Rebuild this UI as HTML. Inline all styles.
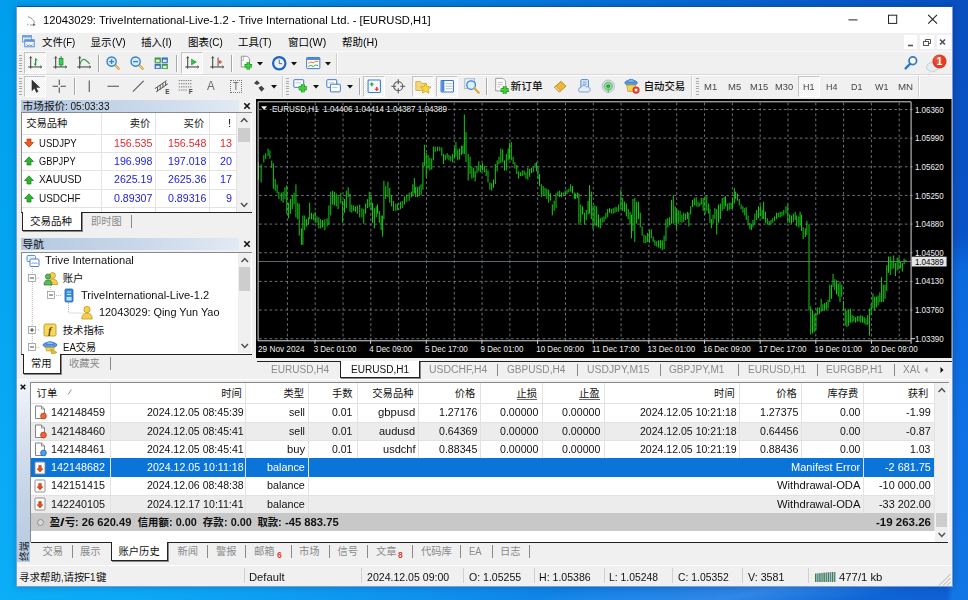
<!DOCTYPE html>
<html><head><meta charset="utf-8"><title>MT4</title>
<style>
html,body{margin:0;padding:0}
body{width:968px;height:600px;overflow:hidden;position:relative;background:linear-gradient(168deg,rgba(255,255,255,0) 88%,rgba(120,190,255,.32) 93.5%,rgba(255,255,255,0) 97%),radial-gradient(ellipse 75% 120% at 0% 100%,rgba(10,200,255,.5) 0%,rgba(10,200,255,0) 100%),linear-gradient(180deg,rgba(30,130,255,0) 35%,rgba(40,140,255,.3) 100%),linear-gradient(95deg,#009aeb 0%,#048fe6 25%,#0576dc 55%,#054bbe 100%);font-family:"Liberation Sans","Noto Sans CJK SC",sans-serif;font-size:10px;color:#1a1a1a}
.a{position:absolute;box-sizing:border-box}
.t{white-space:pre}
.l{display:inline-block;transform-origin:0 50%;white-space:pre;text-align:left;vertical-align:baseline}
</style></head><body>
<div class="a" style="left:946.00px;top:0.00px;width:22.00px;height:600.00px;background:linear-gradient(180deg,#0a4fc0 0%,#0a53c6 39%,#0c69dc 45%,#0e70e2 70%,#1276e4 100%);-webkit-mask-image:linear-gradient(90deg,transparent 0,#000 30%);mask-image:linear-gradient(90deg,transparent 0,#000 30%)"></div>
<div class="a" style="left:16.00px;top:5.60px;width:937.00px;height:581.40px;background:#f0f0f0;border:1px solid rgba(20,90,190,.55);border-top-color:#12528e;box-shadow:0 0 7px rgba(0,0,50,.22)"></div>
<div class="a" style="left:17.00px;top:6.60px;width:935.00px;height:26.40px;background:#fff"></div>
<svg class="a" style="left:25.00px;top:15.00px" width="14" height="12" viewBox="0 0 14 12"><path d="M3 1.500l3 1.500M6 3q3.500 2 3.500 5.500M2 9l1.500 1M5 10h4" stroke="#9a9a9a" stroke-width="1" fill="none"/><path d="M8 8.200l2.800 1.800-2.800.800z" fill="#555"/></svg>
<div class="a t" style="top:13.00px;height:14px;line-height:14px;color:#000;left:43.00px;"><span class="l" style="width:388.01px;font-size:11.45px;transform:scaleX(0.980)">12043029: TriveInternational-Live-1.2 - Trive International Ltd. - [EURUSD,H1]</span></div>
<svg class="a" style="left:845.00px;top:10.00px" width="100" height="20" viewBox="0 0 100 20"><path d="M3.500 9.900h9" stroke="#222" stroke-width="1"/><rect x="43.500" y="5.200" width="8.200" height="8.200" fill="none" stroke="#222" stroke-width="1"/><path d="M83.200 4.900l8.800 8.800M92 4.900l-8.800 8.800" stroke="#222" stroke-width="1.100"/></svg>
<div class="a" style="left:17.00px;top:33.00px;width:935.00px;height:18.00px;background:#f0f0f0"></div>
<svg class="a" style="left:22.00px;top:35.00px" width="14" height="13" viewBox="0 0 14 13"><rect x=".5" y=".5" width="9" height="6.500" fill="#dce9f8" stroke="#6d9fdc" stroke-width=".9"/><rect x=".5" y=".5" width="9" height="2" fill="#6d9fdc"/><rect x="2.800" y="4.800" width="9.400" height="7" fill="#eef5fd" stroke="#4f86cf" stroke-width=".9"/><rect x="2.800" y="4.800" width="9.400" height="2" fill="#5f93d6"/><path d="M4.500 9.500l1.500 1.500 1.500-1.500 1.500 1.500 1.500-1.500" stroke="#4f86cf" fill="none" stroke-width=".8"/></svg>
<div class="a t" style="top:34.50px;height:15px;line-height:15px;color:#000;left:42.00px;"><span style="font-size:10.5px">文件</span><span class="l" style="width:12.27px;font-size:10.81px;transform:scaleX(0.888)">(F)</span></div>
<div class="a t" style="top:34.50px;height:15px;line-height:15px;color:#000;left:90.50px;"><span style="font-size:10.5px">显示</span><span class="l" style="width:13.76px;font-size:10.81px;transform:scaleX(0.955)">(V)</span></div>
<div class="a t" style="top:34.50px;height:15px;line-height:15px;color:#000;left:141.00px;"><span style="font-size:10.5px">插入</span><span class="l" style="width:9.77px;font-size:10.81px;transform:scaleX(0.958)">(I)</span></div>
<div class="a t" style="top:34.50px;height:15px;line-height:15px;color:#000;left:188.00px;"><span style="font-size:10.5px">图表</span><span class="l" style="width:13.74px;font-size:10.81px;transform:scaleX(0.915)">(C)</span></div>
<div class="a t" style="top:34.50px;height:15px;line-height:15px;color:#000;left:238.00px;"><span style="font-size:10.5px">工具</span><span class="l" style="width:12.67px;font-size:10.81px;transform:scaleX(0.918)">(T)</span></div>
<div class="a t" style="top:34.50px;height:15px;line-height:15px;color:#000;left:288.00px;"><span style="font-size:10.5px">窗口</span><span class="l" style="width:17.28px;font-size:10.81px;transform:scaleX(0.992)">(W)</span></div>
<div class="a t" style="top:34.50px;height:15px;line-height:15px;color:#000;left:342.00px;"><span style="font-size:10.5px">帮助</span><span class="l" style="width:14.76px;font-size:10.81px;transform:scaleX(0.983)">(H)</span></div>
<div class="a" style="left:904.00px;top:34.80px;width:13.00px;height:14.60px;background:#fff"></div>
<div class="a" style="left:920.00px;top:34.80px;width:14.30px;height:14.60px;background:#fff"></div>
<div class="a" style="left:936.50px;top:34.80px;width:14.50px;height:14.60px;background:#fff"></div>
<svg class="a" style="left:903.20px;top:34.00px" width="47" height="16" viewBox="0 0 47 16"><path d="M5 11.500h5" stroke="#555" stroke-width="1.6"/><rect x="20.500" y="7.500" width="5" height="4" fill="#fff" stroke="#555"/><path d="M22.500 7.500v-2h5v4h-2" fill="none" stroke="#555"/><path d="M37 5.500l5 5M42 5.500l-5 5" stroke="#4a5566" stroke-width="1.700"/></svg>
<div class="a" style="left:17.50px;top:51.00px;width:934.00px;height:1.00px;background:#fafafa"></div>
<div class="a" style="left:17.50px;top:74.00px;width:934.00px;height:1.00px;background:#d9d9d9"></div>
<div class="a" style="left:17.50px;top:74.80px;width:934.00px;height:1.00px;background:#fff"></div>
<div class="a" style="left:19.30px;top:54.50px;width:3.00px;height:17.00px;background:repeating-linear-gradient(180deg,#9a9a9a 0 1px,transparent 1px 2.600px);opacity:.8"></div>
<div class="a" style="left:24.40px;top:52.30px;width:21.50px;height:21.50px;background:#f9f9f9;border:1px solid #c4c4c4;border-right-color:#fff;border-bottom-color:#fff;background-image:repeating-conic-gradient(#fff 0 25%,#f0f0f0 0 50%);background-size:2px 2px"></div>
<svg class="a" style="left:26.75px;top:55.25px" width="16.5" height="16.5" viewBox="0 0 20 20"><path d="M4.500 2v14.500M1.500 14.500h16" stroke="#3a3a3a" stroke-width="1.200" fill="none"/><path d="M3 4l1.500-2 1.500 2M16 13l2 1.500-2 1.500" stroke="#3a3a3a" fill="none" stroke-width=".9"/><path d="M10.500 4v9M8.500 11h2M10.500 6h2" stroke="#18a030" stroke-width="1.500" fill="none"/></svg>
<svg class="a" style="left:51.85px;top:55.25px" width="16.5" height="16.5" viewBox="0 0 20 20"><path d="M4.500 2v14.500M1.500 14.500h16" stroke="#3a3a3a" stroke-width="1.200" fill="none"/><path d="M3 4l1.500-2 1.500 2M16 13l2 1.500-2 1.500" stroke="#3a3a3a" fill="none" stroke-width=".9"/><path d="M11 1.500v13" stroke="#1a7a22" stroke-width="1.200"/><rect x="8.700" y="4" width="4.600" height="8" fill="#2fd84a" stroke="#1a7a22" stroke-width=".8"/></svg>
<svg class="a" style="left:76.05px;top:55.25px" width="16.5" height="16.5" viewBox="0 0 20 20"><path d="M4.500 2v14.500M1.500 14.500h16" stroke="#3a3a3a" stroke-width="1.200" fill="none"/><path d="M3 4l1.500-2 1.500 2M16 13l2 1.500-2 1.500" stroke="#3a3a3a" fill="none" stroke-width=".9"/><path d="M4.500 12q3-9 7-6t5 5" stroke="#2a9a3a" stroke-width="1.300" fill="none"/></svg>
<div class="a" style="left:98.00px;top:54.50px;width:1.00px;height:17.00px;background:#a8a8a8"></div>
<div class="a" style="left:99.00px;top:54.50px;width:1.00px;height:17.00px;background:#fff"></div>
<svg class="a" style="left:104.55px;top:55.25px" width="16.5" height="16.5" viewBox="0 0 20 20"><path d="M11.500 11.500l5 5" stroke="#d9a53a" stroke-width="3" stroke-linecap="round"/><path d="M11.500 11.500l5 5" stroke="#f5d98a" stroke-width="1.200" stroke-linecap="round"/><circle cx="8" cy="8" r="5.600" fill="#d8ecfb" stroke="#2f7fd0" stroke-width="1.600"/><path d="M5 8h6M8 5v6" stroke="#2f7fd0" stroke-width="1.600"/></svg>
<svg class="a" style="left:128.75px;top:55.25px" width="16.5" height="16.5" viewBox="0 0 20 20"><path d="M11.500 11.500l5 5" stroke="#d9a53a" stroke-width="3" stroke-linecap="round"/><path d="M11.500 11.500l5 5" stroke="#f5d98a" stroke-width="1.200" stroke-linecap="round"/><circle cx="8" cy="8" r="5.600" fill="#d8ecfb" stroke="#2f7fd0" stroke-width="1.600"/><path d="M5 8h6" stroke="#2f7fd0" stroke-width="1.600"/></svg>
<svg class="a" style="left:153.45px;top:55.25px" width="16.5" height="16.5" viewBox="0 0 20 20"><rect x="2" y="3" width="7.500" height="6.500" fill="#3f9a3f"/><rect x="10.500" y="3" width="7.500" height="6.500" fill="#2f6fc8"/><rect x="2" y="10.500" width="7.500" height="6.500" fill="#2f6fc8"/><rect x="10.500" y="10.500" width="7.500" height="6.500" fill="#3f9a3f"/><rect x="3.500" y="5.500" width="4.500" height="3" fill="#dff0df"/><rect x="12" y="5.500" width="4.500" height="3" fill="#dfeafa"/><rect x="3.500" y="13" width="4.500" height="3" fill="#dfeafa"/><rect x="12" y="13" width="4.500" height="3" fill="#dff0df"/></svg>
<div class="a" style="left:176.30px;top:54.50px;width:1.00px;height:17.00px;background:#a8a8a8"></div>
<div class="a" style="left:177.30px;top:54.50px;width:1.00px;height:17.00px;background:#fff"></div>
<div class="a" style="left:181.30px;top:52.30px;width:21.50px;height:21.50px;background:#f9f9f9;border:1px solid #c4c4c4;border-right-color:#fff;border-bottom-color:#fff;background-image:repeating-conic-gradient(#fff 0 25%,#f0f0f0 0 50%);background-size:2px 2px"></div>
<svg class="a" style="left:184.05px;top:55.25px" width="16.5" height="16.5" viewBox="0 0 20 20"><path d="M4.500 2v14.500M1.500 14.500h16" stroke="#3a3a3a" stroke-width="1.200" fill="none"/><path d="M3 4l1.500-2 1.500 2M16 13l2 1.500-2 1.500" stroke="#3a3a3a" fill="none" stroke-width=".9"/><path d="M9 5l6 3.500-6 3.500z" fill="#35c04a" stroke="#1a8a2a" stroke-width=".7"/></svg>
<svg class="a" style="left:208.75px;top:55.25px" width="16.5" height="16.5" viewBox="0 0 20 20"><path d="M4.500 2v14.500M1.500 14.500h16" stroke="#3a3a3a" stroke-width="1.200" fill="none"/><path d="M3 4l1.500-2 1.500 2M16 13l2 1.500-2 1.500" stroke="#3a3a3a" fill="none" stroke-width=".9"/><path d="M11 3v11" stroke="#555" stroke-width="1.200"/><path d="M16 8.500h-4M14 6.500l-2 2 2 2" stroke="#d04a20" stroke-width="1.300" fill="none"/></svg>
<div class="a" style="left:230.70px;top:54.50px;width:1.00px;height:17.00px;background:#a8a8a8"></div>
<div class="a" style="left:231.70px;top:54.50px;width:1.00px;height:17.00px;background:#fff"></div>
<svg class="a" style="left:237.55px;top:55.25px" width="16.5" height="16.5" viewBox="0 0 20 20"><path d="M4 1.500h7l3 3v10h-10z" fill="#fff" stroke="#777" stroke-width=".9"/><path d="M6.500 1.500v5h-2.500" fill="none" stroke="#999" stroke-width=".8"/><path d="M12.5 8.5v9M8.0 13h9" stroke="#1a8a1a" stroke-width="4.200"/><path d="M12.5 8.5v9M8.0 13h9" stroke="#3fd23f" stroke-width="2.600"/></svg>
<svg class="a" style="left:257.10px;top:62.00px" width="6" height="4" viewBox="0 0 6 4"><path d="M0 0h6l-3 3.500z" fill="#111"/></svg>
<svg class="a" style="left:270.65px;top:55.25px" width="16.5" height="16.5" viewBox="0 0 20 20"><circle cx="10" cy="10" r="7.500" fill="#eaf4ff" stroke="#1f62c0" stroke-width="2.600"/><path d="M10 5.500v5h3.500" stroke="#556" stroke-width="1.100" fill="none"/></svg>
<svg class="a" style="left:291.10px;top:62.00px" width="6" height="4" viewBox="0 0 6 4"><path d="M0 0h6l-3 3.500z" fill="#111"/></svg>
<svg class="a" style="left:305.05px;top:55.25px" width="16.5" height="16.5" viewBox="0 0 20 20"><rect x="2" y="3" width="16" height="13.500" rx="1" fill="#fff" stroke="#3a78c8" stroke-width="1.200"/><rect x="2" y="3" width="16" height="3" fill="#4a8ad8"/><path d="M4 10l3-1.500 3 1 3-2 3 .5" stroke="#e0703a" stroke-width="1.200" fill="none"/><path d="M4 14l3-1.500 3 1.500 3-2 3 1" stroke="#2fa84a" stroke-width="1.200" fill="none"/></svg>
<svg class="a" style="left:325.20px;top:62.00px" width="6" height="4" viewBox="0 0 6 4"><path d="M0 0h6l-3 3.500z" fill="#111"/></svg>
<div class="a" style="left:335.50px;top:52.50px;width:1.00px;height:21.00px;background:#d0d0d0"></div>
<div class="a" style="left:336.50px;top:52.50px;width:1.00px;height:21.00px;background:#fff"></div>
<svg class="a" style="left:902.00px;top:53.50px" width="18" height="18" viewBox="0 0 20 20"><circle cx="12" cy="7.500" r="4.200" fill="#fff" stroke="#2f78d0" stroke-width="2"/><path d="M9 11l-5 5" stroke="#2f78d0" stroke-width="2.600" stroke-linecap="round"/></svg>
<svg class="a" style="left:925.00px;top:54.00px" width="24" height="20" viewBox="0 0 24 20"><ellipse cx="7.500" cy="13" rx="6" ry="4.500" fill="#e8eef0" stroke="#b8c4c8" stroke-width=".8"/><path d="M5 16.500l-1 3 4-2.500z" fill="#d8e4e0"/><circle cx="14.500" cy="7.500" r="7" fill="#e23b24"/><circle cx="13" cy="5.500" r="4" fill="#f06a4a" opacity=".5"/><text x="14.500" y="11.200" font-size="10.500" font-weight="bold" fill="#fff" text-anchor="middle" font-family="Liberation Sans,sans-serif">1</text></svg>
<div class="a" style="left:19.30px;top:78.00px;width:3.00px;height:17.00px;background:repeating-linear-gradient(180deg,#9a9a9a 0 1px,transparent 1px 2.600px);opacity:.8"></div>
<div class="a" style="left:24.40px;top:75.80px;width:21.50px;height:21.50px;background:#f9f9f9;border:1px solid #c4c4c4;border-right-color:#fff;border-bottom-color:#fff;background-image:repeating-conic-gradient(#fff 0 25%,#f0f0f0 0 50%);background-size:2px 2px"></div>
<svg class="a" style="left:26.75px;top:78.05px" width="16.5" height="16.5" viewBox="0 0 20 20"><path d="M6 2.500v13l3-3 2.500 5 2-1-2.500-5h4.500z" fill="#333" stroke="#222" stroke-width=".5"/></svg>
<svg class="a" style="left:51.15px;top:78.05px" width="16.5" height="16.5" viewBox="0 0 20 20"><path d="M10 2v6.500M10 11.500v6.500M2 10h6.500M11.500 10h6.500" stroke="#444" stroke-width="1.200"/></svg>
<div class="a" style="left:74.30px;top:78.00px;width:1.00px;height:17.00px;background:#a8a8a8"></div>
<div class="a" style="left:75.30px;top:78.00px;width:1.00px;height:17.00px;background:#fff"></div>
<svg class="a" style="left:80.75px;top:78.05px" width="16.5" height="16.5" viewBox="0 0 20 20"><path d="M10 3v14" stroke="#555" stroke-width="1.300"/></svg>
<svg class="a" style="left:105.45px;top:78.05px" width="16.5" height="16.5" viewBox="0 0 20 20"><path d="M3 10h14" stroke="#555" stroke-width="1.300"/></svg>
<svg class="a" style="left:129.65px;top:78.05px" width="16.5" height="16.5" viewBox="0 0 20 20"><path d="M3.500 16.500l13-13" stroke="#555" stroke-width="1.300"/></svg>
<svg class="a" style="left:153.00px;top:77.30px" width="18" height="18" viewBox="0 0 20 20"><path d="M2 13l13-9M3.500 16.500l13-9M5 11v5M8 9v5M11 7v5M14 5v5" stroke="#555" stroke-width="1.100"/><text x="13.500" y="19" font-size="7" font-weight="bold" fill="#444" font-family="Liberation Sans,sans-serif">E</text></svg>
<svg class="a" style="left:177.30px;top:77.30px" width="18" height="18" viewBox="0 0 20 20"><path d="M2 4h14M2 7.500h14M2 11h14M2 14.500h9" stroke="#777" stroke-width="1.100" stroke-dasharray="1.500 1"/><text x="13" y="19" font-size="7" font-weight="bold" fill="#444" font-family="Liberation Sans,sans-serif">F</text></svg>
<div class="a t" style="top:79.00px;height:15px;line-height:15px;color:#6a6a6a;left:60.80px;width:300px;text-align:center;"><span class="l" style="width:7.74px;font-size:12.36px;transform:scaleX(0.939)">A</span></div>
<div class="a" style="left:229.50px;top:79.50px;width:12.00px;height:13.50px;border:1px dotted #777"></div>
<div class="a t" style="top:79.00px;height:15px;line-height:15px;color:#5a5a5a;left:85.60px;width:300px;text-align:center;"><span class="l" style="width:5.76px;font-size:11.33px;transform:scaleX(0.833)">T</span></div>
<svg class="a" style="left:251.45px;top:78.05px" width="16.5" height="16.5" viewBox="0 0 20 20"><path d="M3 7l4-4 4 4-4 2.500z M9 13l4-2.500 4 4-4 4z" fill="#444" transform="scale(.9) translate(1,0)"/></svg>
<svg class="a" style="left:271.20px;top:84.80px" width="6" height="4" viewBox="0 0 6 4"><path d="M0 0h6l-3 3.500z" fill="#111"/></svg>
<div class="a" style="left:282.00px;top:76.00px;width:1.00px;height:21.00px;background:#d0d0d0"></div>
<div class="a" style="left:283.00px;top:76.00px;width:1.00px;height:21.00px;background:#fff"></div>
<div class="a" style="left:286.30px;top:78.00px;width:3.00px;height:17.00px;background:repeating-linear-gradient(180deg,#9a9a9a 0 1px,transparent 1px 2.600px);opacity:.8"></div>
<svg class="a" style="left:291.70px;top:77.30px" width="18" height="18" viewBox="0 0 20 20"><rect x="2" y="3" width="11" height="8.500" rx=".8" fill="#fff" stroke="#3a78c8" stroke-width="1.100"/><path d="M4 6.5h6" stroke="#9ab" stroke-width=".8"/><path d="M12 8.0v9M7.5 12.5h9" stroke="#1a8a1a" stroke-width="4.200"/><path d="M12 8.0v9M7.5 12.5h9" stroke="#3fd23f" stroke-width="2.600"/></svg>
<svg class="a" style="left:313.10px;top:84.80px" width="6" height="4" viewBox="0 0 6 4"><path d="M0 0h6l-3 3.500z" fill="#111"/></svg>
<svg class="a" style="left:325.10px;top:77.30px" width="18" height="18" viewBox="0 0 20 20"><rect x="2" y="3" width="11" height="8.500" rx=".8" fill="#fff" stroke="#3a78c8" stroke-width="1.100"/><path d="M4 6.5h6" stroke="#9ab" stroke-width=".8"/><rect x="6" y="8" width="11" height="8.500" rx=".8" fill="#fff" stroke="#3a78c8" stroke-width="1.100"/><path d="M8 11.5h6" stroke="#9ab" stroke-width=".8"/></svg>
<svg class="a" style="left:346.90px;top:84.80px" width="6" height="4" viewBox="0 0 6 4"><path d="M0 0h6l-3 3.500z" fill="#111"/></svg>
<div class="a" style="left:359.00px;top:78.00px;width:1.00px;height:17.00px;background:#a8a8a8"></div>
<div class="a" style="left:360.00px;top:78.00px;width:1.00px;height:17.00px;background:#fff"></div>
<div class="a" style="left:363.40px;top:75.80px;width:21.50px;height:21.50px;background:#f9f9f9;border:1px solid #c4c4c4;border-right-color:#fff;border-bottom-color:#fff;background-image:repeating-conic-gradient(#fff 0 25%,#f0f0f0 0 50%);background-size:2px 2px"></div>
<svg class="a" style="left:365.95px;top:78.05px" width="16.5" height="16.5" viewBox="0 0 20 20"><rect x="2.500" y="2.500" width="15" height="15" rx="1" fill="#f4f9ff" stroke="#3a80d0" stroke-width="1.300"/><path d="M7 5l3 3h-2v2h-2v-2h-2z" fill="#2faa3a"/><path d="M13 16l-3-3h2v-2h2v2h2z" fill="#e0442a"/></svg>
<svg class="a" style="left:390.45px;top:78.05px" width="16.5" height="16.5" viewBox="0 0 20 20"><circle cx="10" cy="10" r="5.500" fill="none" stroke="#555" stroke-width="1.300"/><path d="M10 1.500v6M10 12.500v6M1.500 10h6M12.500 10h6" stroke="#555" stroke-width="1.300"/></svg>
<div class="a" style="left:412.00px;top:75.80px;width:21.50px;height:21.50px;background:#f9f9f9;border:1px solid #c4c4c4;border-right-color:#fff;border-bottom-color:#fff;background-image:repeating-conic-gradient(#fff 0 25%,#f0f0f0 0 50%);background-size:2px 2px"></div>
<svg class="a" style="left:413.90px;top:77.30px" width="18" height="18" viewBox="0 0 20 20"><path d="M2 5h5l1.500 2h5v8h-11.500z" fill="#f3d77a" stroke="#c8a030" stroke-width=".8"/><path d="M13 7l1.800 3.600 4 .5-2.900 2.800.7 4-3.600-1.900-3.600 1.900.7-4-2.900-2.800 4-.5z" fill="#f8d840" stroke="#c89a20" stroke-width=".8"/></svg>
<div class="a" style="left:436.40px;top:75.80px;width:21.50px;height:21.50px;background:#f9f9f9;border:1px solid #c4c4c4;border-right-color:#fff;border-bottom-color:#fff;background-image:repeating-conic-gradient(#fff 0 25%,#f0f0f0 0 50%);background-size:2px 2px"></div>
<svg class="a" style="left:438.75px;top:78.05px" width="16.5" height="16.5" viewBox="0 0 20 20"><rect x="2.500" y="3" width="15" height="14" rx="1" fill="#fff" stroke="#3a78c8" stroke-width="1.300"/><rect x="3" y="3.500" width="3.500" height="13" fill="#4a8ad8"/><path d="M8 7h8M8 10h8M8 13h8" stroke="#9ab" stroke-width=".9"/></svg>
<svg class="a" style="left:462.80px;top:77.30px" width="18" height="18" viewBox="0 0 20 20"><rect x="2" y="2" width="11" height="11" fill="#eef4fa" stroke="#8ab" stroke-width=".8"/><circle cx="9" cy="9" r="4.800" fill="#dbeeff" stroke="#3a80d0" stroke-width="1.400"/><path d="M12.500 12.500l5 5" stroke="#d9a53a" stroke-width="2.400" stroke-linecap="round"/></svg>
<div class="a" style="left:485.80px;top:78.00px;width:1.00px;height:17.00px;background:#a8a8a8"></div>
<div class="a" style="left:486.80px;top:78.00px;width:1.00px;height:17.00px;background:#fff"></div>
<svg class="a" style="left:492.50px;top:77.30px" width="18" height="18" viewBox="0 0 20 20"><path d="M3 1.500h8l3 3v11h-11z" fill="#fff" stroke="#888" stroke-width=".9"/><path d="M5 6h6M5 8.500h6M5 11h3" stroke="#aaa" stroke-width=".8"/><path d="M13 10.0v9M8.5 14.5h9" stroke="#1a8a1a" stroke-width="4.200"/><path d="M13 10.0v9M8.5 14.5h9" stroke="#3fd23f" stroke-width="2.600"/></svg>
<div class="a t" style="top:79.00px;height:15px;line-height:15px;color:#111;left:510.60px;font-weight:500;"><span style="font-size:10.7px">新订单</span></div>
<svg class="a" style="left:551.85px;top:78.05px" width="16.5" height="16.5" viewBox="0 0 20 20"><path d="M3 11l8-7 6 6-8 7z" fill="#e8b83a" stroke="#b07a10" stroke-width=".9"/><path d="M3 11l6 6 1-2-5-5z" fill="#f6dc8a" stroke="#b07a10" stroke-width=".6"/></svg>
<svg class="a" style="left:575.95px;top:78.05px" width="16.5" height="16.5" viewBox="0 0 20 20"><rect x="6" y="2" width="9" height="10" rx="1" fill="#e8f2ff" stroke="#3a78c8" stroke-width="1.100"/><path d="M8 5h5M8 7.500h5" stroke="#3a78c8" stroke-width=".9"/><path d="M3 14.500a3 3 0 0 1 3-3 3.500 3.500 0 0 1 6.500-.5 3 3 0 0 1 4.500 2.800 2.500 2.500 0 0 1-2.500 3.200h-9a2.500 2.500 0 0 1-2.500-2.500z" fill="#e4eefb" stroke="#5a8acb" stroke-width=".9"/></svg>
<svg class="a" style="left:600.25px;top:78.05px" width="16.5" height="16.5" viewBox="0 0 20 20"><circle cx="10" cy="10" r="7.500" fill="#d8e8e0" stroke="#9ab" stroke-width=".8"/><circle cx="10" cy="10" r="5" fill="#8fd49a" stroke="#4aa85a" stroke-width=".8"/><circle cx="10" cy="10" r="2.200" fill="#2a9a3a"/><path d="M10 10v8" stroke="#6a7" stroke-width="1"/></svg>
<svg class="a" style="left:623.00px;top:77.30px" width="18" height="18" viewBox="0 0 20 20"><ellipse cx="9" cy="6.500" rx="7" ry="3" fill="#5a9ae0" stroke="#2a6ab8" stroke-width=".8"/><path d="M5 6a4 3.500 0 0 1 8 0z" fill="#7ab6f0" stroke="#2a6ab8" stroke-width=".7"/><path d="M4 9h10l-1.500 7h-7z" fill="#f2cf5a" stroke="#c09a20" stroke-width=".8"/><circle cx="14.500" cy="14.500" r="4" fill="#e03a24"/><rect x="13" y="13" width="3" height="3" fill="#fff"/></svg>
<div class="a t" style="top:79.00px;height:15px;line-height:15px;color:#111;left:643.70px;font-weight:500;"><span style="font-size:10.4px">自动交易</span></div>
<div class="a" style="left:691.30px;top:76.00px;width:1.00px;height:21.00px;background:#d0d0d0"></div>
<div class="a" style="left:692.30px;top:76.00px;width:1.00px;height:21.00px;background:#fff"></div>
<div class="a" style="left:696.00px;top:78.00px;width:3.00px;height:17.00px;background:repeating-linear-gradient(180deg,#9a9a9a 0 1px,transparent 1px 2.600px);opacity:.8"></div>
<div class="a" style="left:798.00px;top:75.80px;width:21.50px;height:21.50px;background:#f9f9f9;border:1px solid #c4c4c4;border-right-color:#fff;border-bottom-color:#fff;background-image:repeating-conic-gradient(#fff 0 25%,#f0f0f0 0 50%);background-size:2px 2px"></div>
<div class="a t" style="top:80.00px;height:14px;line-height:14px;color:#454545;left:560.20px;width:300px;text-align:center;"><span class="l" style="width:13.22px;font-size:8.86px;transform:scaleX(1.075)">M1</span></div>
<div class="a t" style="top:80.00px;height:14px;line-height:14px;color:#454545;left:584.40px;width:300px;text-align:center;"><span class="l" style="width:13.22px;font-size:8.86px;transform:scaleX(1.075)">M5</span></div>
<div class="a t" style="top:80.00px;height:14px;line-height:14px;color:#454545;left:609.50px;width:300px;text-align:center;"><span class="l" style="width:18.18px;font-size:8.86px;transform:scaleX(1.055)">M15</span></div>
<div class="a t" style="top:80.00px;height:14px;line-height:14px;color:#454545;left:633.80px;width:300px;text-align:center;"><span class="l" style="width:18.18px;font-size:8.86px;transform:scaleX(1.055)">M30</span></div>
<div class="a t" style="top:80.00px;height:14px;line-height:14px;color:#454545;left:658.30px;width:300px;text-align:center;"><span class="l" style="width:11.49px;font-size:8.86px;transform:scaleX(1.015)">H1</span></div>
<div class="a t" style="top:80.00px;height:14px;line-height:14px;color:#454545;left:682.00px;width:300px;text-align:center;"><span class="l" style="width:11.49px;font-size:8.86px;transform:scaleX(1.015)">H4</span></div>
<div class="a t" style="top:80.00px;height:14px;line-height:14px;color:#454545;left:706.60px;width:300px;text-align:center;"><span class="l" style="width:11.41px;font-size:8.86px;transform:scaleX(1.008)">D1</span></div>
<div class="a t" style="top:80.00px;height:14px;line-height:14px;color:#454545;left:731.40px;width:300px;text-align:center;"><span class="l" style="width:13.55px;font-size:8.86px;transform:scaleX(1.020)">W1</span></div>
<div class="a t" style="top:80.00px;height:14px;line-height:14px;color:#454545;left:755.40px;width:300px;text-align:center;"><span class="l" style="width:15.15px;font-size:8.86px;transform:scaleX(1.099)">MN</span></div>
<div class="a" style="left:918.30px;top:76.00px;width:1.00px;height:21.00px;background:#d0d0d0"></div>
<div class="a" style="left:919.30px;top:76.00px;width:1.00px;height:21.00px;background:#fff"></div>
<div class="a" style="left:20.70px;top:99.50px;width:218.00px;height:12.00px;background:linear-gradient(90deg,#b4c8e0 0%,#c9d8ea 55%,#e2eaf4 100%)"></div>
<div class="a t" style="top:98.60px;height:15px;line-height:15px;color:#111;left:22.50px;"><span style="font-size:10.7px">市场报价</span><span class="l" style="width:44.50px;font-size:11.02px;transform:scaleX(0.908)">: 05:03:33</span></div>
<svg class="a" style="left:242.00px;top:100.60px" width="10" height="10" viewBox="0 0 10 10"><path d="M2.3 2.3L7.7 7.7M7.7 2.3L2.3 7.7" stroke="#111" stroke-width="1.6"/></svg>
<div class="a" style="left:20.70px;top:112.40px;width:231.00px;height:100.00px;background:#fff;border-left:1px solid #8a8a8a;border-top:1px solid #8a8a8a"></div>
<div class="a" style="left:21.70px;top:133.70px;width:214.70px;height:1.00px;background:#e3e3e3"></div>
<div class="a" style="left:21.70px;top:152.10px;width:214.70px;height:1.00px;background:#e3e3e3"></div>
<div class="a" style="left:21.70px;top:170.40px;width:214.70px;height:1.00px;background:#e3e3e3"></div>
<div class="a" style="left:21.70px;top:188.80px;width:214.70px;height:1.00px;background:#e3e3e3"></div>
<div class="a" style="left:21.70px;top:207.10px;width:214.70px;height:1.00px;background:#e3e3e3"></div>
<div class="a" style="left:101.30px;top:113.40px;width:1.00px;height:99.00px;background:#e3e3e3"></div>
<div class="a" style="left:155.10px;top:113.40px;width:1.00px;height:99.00px;background:#e3e3e3"></div>
<div class="a" style="left:209.20px;top:113.40px;width:1.00px;height:99.00px;background:#e3e3e3"></div>
<div class="a" style="left:236.40px;top:113.40px;width:1.00px;height:99.00px;background:#e3e3e3"></div>
<div class="a t" style="top:116.00px;height:15px;line-height:15px;color:#111;left:26.20px;"><span style="font-size:10.3px">交易品种</span></div>
<div class="a t" style="top:116.00px;height:15px;line-height:15px;color:#111;right:817.60px;"><span style="font-size:10.3px">卖价</span></div>
<div class="a t" style="top:116.00px;height:15px;line-height:15px;color:#111;right:763.80px;"><span style="font-size:10.3px">买价</span></div>
<div class="a t" style="top:116.00px;height:15px;line-height:15px;color:#111;left:79.50px;width:300px;text-align:center;"><span class="l" style="width:3.13px;font-size:10.61px;transform:scaleX(1.062)">!</span></div>
<svg class="a" style="left:24.00px;top:137.90px" width="10" height="10" viewBox="0 0 10 10"><path d="M5 9.200l4.500-4.700h-2.500v-3.500h-4v3.500h-2.500z" fill="#ee5a24" stroke="#b8320c" stroke-width=".7"/></svg>
<div class="a t" style="top:135.70px;height:15px;line-height:15px;color:#111;left:38.80px;"><span class="l" style="width:37.71px;font-size:10.71px;transform:scaleX(0.892)">USDJPY</span></div>
<div class="a t" style="top:135.70px;height:15px;line-height:15px;color:#e0282e;right:815.90px;"><span class="l" style="width:38.40px;font-size:10.71px;transform:scaleX(0.992)">156.535</span></div>
<div class="a t" style="top:135.70px;height:15px;line-height:15px;color:#e0282e;right:762.00px;"><span class="l" style="width:38.40px;font-size:10.71px;transform:scaleX(0.992)">156.548</span></div>
<div class="a t" style="top:135.70px;height:15px;line-height:15px;color:#e0282e;right:735.80px;"><span class="l" style="width:12.00px;font-size:10.71px;transform:scaleX(1.007)">13</span></div>
<svg class="a" style="left:24.00px;top:156.30px" width="10" height="10" viewBox="0 0 10 10"><path d="M5 .8l4.500 4.700h-2.500v3.500h-4v-3.500h-2.500z" fill="#2fb52f" stroke="#1a7a1a" stroke-width=".7"/></svg>
<div class="a t" style="top:154.10px;height:15px;line-height:15px;color:#111;left:38.80px;"><span class="l" style="width:36.60px;font-size:10.71px;transform:scaleX(0.866)">GBPJPY</span></div>
<div class="a t" style="top:154.10px;height:15px;line-height:15px;color:#2222d8;right:815.90px;"><span class="l" style="width:38.40px;font-size:10.71px;transform:scaleX(0.992)">196.998</span></div>
<div class="a t" style="top:154.10px;height:15px;line-height:15px;color:#2222d8;right:762.00px;"><span class="l" style="width:38.40px;font-size:10.71px;transform:scaleX(0.992)">197.018</span></div>
<div class="a t" style="top:154.10px;height:15px;line-height:15px;color:#2222d8;right:735.80px;"><span class="l" style="width:12.00px;font-size:10.71px;transform:scaleX(1.007)">20</span></div>
<svg class="a" style="left:24.00px;top:174.60px" width="10" height="10" viewBox="0 0 10 10"><path d="M5 .8l4.500 4.700h-2.500v3.500h-4v-3.500h-2.500z" fill="#2fb52f" stroke="#1a7a1a" stroke-width=".7"/></svg>
<div class="a t" style="top:172.40px;height:15px;line-height:15px;color:#111;left:38.80px;"><span class="l" style="width:42.74px;font-size:10.71px;transform:scaleX(0.957)">XAUUSD</span></div>
<div class="a t" style="top:172.40px;height:15px;line-height:15px;color:#2222d8;right:815.90px;"><span class="l" style="width:38.40px;font-size:10.71px;transform:scaleX(0.992)">2625.19</span></div>
<div class="a t" style="top:172.40px;height:15px;line-height:15px;color:#2222d8;right:762.00px;"><span class="l" style="width:38.40px;font-size:10.71px;transform:scaleX(0.992)">2625.36</span></div>
<div class="a t" style="top:172.40px;height:15px;line-height:15px;color:#2222d8;right:735.80px;"><span class="l" style="width:12.00px;font-size:10.71px;transform:scaleX(1.007)">17</span></div>
<svg class="a" style="left:24.00px;top:193.00px" width="10" height="10" viewBox="0 0 10 10"><path d="M5 .8l4.500 4.700h-2.500v3.500h-4v-3.500h-2.500z" fill="#2fb52f" stroke="#1a7a1a" stroke-width=".7"/></svg>
<div class="a t" style="top:190.80px;height:15px;line-height:15px;color:#111;left:38.80px;"><span class="l" style="width:41.57px;font-size:10.71px;transform:scaleX(0.931)">USDCHF</span></div>
<div class="a t" style="top:190.80px;height:15px;line-height:15px;color:#2222d8;right:815.90px;"><span class="l" style="width:38.40px;font-size:10.71px;transform:scaleX(0.992)">0.89307</span></div>
<div class="a t" style="top:190.80px;height:15px;line-height:15px;color:#2222d8;right:762.00px;"><span class="l" style="width:38.40px;font-size:10.71px;transform:scaleX(0.992)">0.89316</span></div>
<div class="a t" style="top:190.80px;height:15px;line-height:15px;color:#2222d8;right:735.80px;"><span class="l" style="width:6.00px;font-size:10.71px;transform:scaleX(1.007)">9</span></div>
<div class="a" style="left:237.20px;top:113.40px;width:14.30px;height:98.60px;background:#f0f0f0"></div>
<div class="a" style="left:238.20px;top:128.00px;width:12.30px;height:14.00px;background:#cdcdcd"></div>
<svg class="a" style="left:237.20px;top:116.40px" width="14.3" height="8" viewBox="0 0 14.3 8"><path d="M3.95 6L7.15 2.500L10.350000000000001 6" stroke="#505050" stroke-width="1.500" fill="none"/></svg>
<svg class="a" style="left:237.20px;top:201.00px" width="14.3" height="8" viewBox="0 0 14.3 8"><path d="M3.95 2L7.15 5.500L10.350000000000001 2" stroke="#505050" stroke-width="1.500" fill="none"/></svg>
<div class="a" style="left:20.70px;top:212.00px;width:231.00px;height:1.00px;background:#222"></div>
<div class="a" style="left:22.30px;top:212.00px;width:60.00px;height:19.30px;background:#fff;border:1px solid #222;border-top:none;box-shadow:1px 1px 0 #888"></div>
<div class="a t" style="top:214.30px;height:15px;line-height:15px;color:#111;left:30.00px;"><span style="font-size:10.5px">交易品种</span></div>
<div class="a t" style="top:214.00px;height:15px;line-height:15px;color:#8a8a8a;left:90.90px;"><span style="font-size:10.3px">即时图</span></div>
<div class="a" style="left:130.60px;top:215.00px;width:1.00px;height:13.00px;background:#8a8a8a"></div>
<div class="a" style="left:20.70px;top:237.50px;width:218.00px;height:12.30px;background:linear-gradient(90deg,#b4c8e0 0%,#c9d8ea 55%,#e2eaf4 100%)"></div>
<div class="a t" style="top:236.60px;height:15.3px;line-height:15.3px;color:#111;left:22.50px;"><span style="font-size:10.7px">导航</span></div>
<svg class="a" style="left:242.00px;top:238.80px" width="10" height="10" viewBox="0 0 10 10"><path d="M2.3 2.3L7.7 7.7M7.7 2.3L2.3 7.7" stroke="#111" stroke-width="1.6"/></svg>
<div class="a" style="left:20.70px;top:251.70px;width:231.00px;height:102.00px;background:#fff;border-left:1px solid #8a8a8a;border-top:1px solid #8a8a8a"></div>
<div class="a" style="left:237.70px;top:252.70px;width:13.50px;height:100.50px;background:#f0f0f0"></div>
<div class="a" style="left:238.70px;top:267.30px;width:11.50px;height:23.40px;background:#cdcdcd"></div>
<svg class="a" style="left:237.70px;top:255.70px" width="13.5" height="8" viewBox="0 0 13.5 8"><path d="M3.55 6L6.75 2.500L9.95 6" stroke="#505050" stroke-width="1.500" fill="none"/></svg>
<svg class="a" style="left:237.70px;top:342.20px" width="13.5" height="8" viewBox="0 0 13.5 8"><path d="M3.55 2L6.75 5.500L9.95 2" stroke="#505050" stroke-width="1.500" fill="none"/></svg>
<svg class="a" style="left:20.00px;top:252.00px" width="120" height="102" viewBox="0 0 120 102"><path d="M12.300 14v81M12.300 26h8M12.300 78h8M12.300 95.500h8M30.700 31v12M34 43.500h8M48.500 49v12h16" stroke="#aaa" stroke-width=".8" stroke-dasharray="1 1" fill="none"/></svg>
<svg class="a" style="left:25.50px;top:253.50px" width="14" height="14" viewBox="0 0 14 14"><rect x="1" y="1.500" width="8.500" height="6" rx="1" fill="#eaf3ff" stroke="#5b93d6"/><rect x="4" y="5" width="9" height="7.500" rx="1" fill="#fff" stroke="#4a84cc"/><path d="M5.500 10l1.500-1.500 1.500 1.500 1.500-1.500 1.500 1.500" stroke="#4a84cc" fill="none" stroke-width=".8"/></svg>
<div class="a t" style="top:253.20px;height:15px;line-height:15px;color:#111;left:45.00px;"><span class="l" style="width:88.92px;font-size:10.71px;transform:scaleX(1.042)">Trive International</span></div>
<svg class="a" style="left:28.30px;top:274.00px" width="8" height="8" viewBox="0 0 8 8"><rect x=".5" y=".5" width="7" height="7" fill="#fff" stroke="#9a9a9a" stroke-width=".8"/><path d="M2 4h4" stroke="#333" stroke-width=".9"/></svg>
<svg class="a" style="left:42.50px;top:270.50px" width="15" height="15" viewBox="0 0 15 15"><circle cx="9.500" cy="4.500" r="3" fill="#f3cf4a" stroke="#b89020" stroke-width=".7"/><path d="M4.500 13.500q0-5.500 5-5.500t5 5.500z" fill="#f3cf4a" stroke="#b89020" stroke-width=".7"/><circle cx="5" cy="5.500" r="2.600" fill="#5ab85a" stroke="#2a7a2a" stroke-width=".7"/><path d="M1 14q0-5 4-5t4 5z" fill="#5ab85a" stroke="#2a7a2a" stroke-width=".7"/></svg>
<div class="a t" style="top:270.50px;height:15px;line-height:15px;color:#111;left:62.70px;"><span style="font-size:10.4px">账户</span></div>
<svg class="a" style="left:46.70px;top:291.30px" width="8" height="8" viewBox="0 0 8 8"><rect x=".5" y=".5" width="7" height="7" fill="#fff" stroke="#9a9a9a" stroke-width=".8"/><path d="M2 4h4" stroke="#333" stroke-width=".9"/></svg>
<svg class="a" style="left:63.50px;top:287.80px" width="10" height="15" viewBox="0 0 10 15"><rect x="1" y="1" width="8" height="13" rx="1.200" fill="#3a8ee0" stroke="#1a5aa8" stroke-width=".8"/><path d="M3 4h4M3 6.500h4" stroke="#d8ecff" stroke-width=".9"/><rect x="2.500" y="9" width="5" height="3.500" fill="#bfe0ff"/></svg>
<div class="a t" style="top:287.80px;height:15px;line-height:15px;color:#111;left:81.00px;"><span class="l" style="width:128.27px;font-size:10.71px;transform:scaleX(1.034)">TriveInternational-Live-1.2</span></div>
<svg class="a" style="left:81.00px;top:305.20px" width="12" height="15" viewBox="0 0 12 15"><circle cx="6" cy="4.500" r="3.200" fill="#f3cf4a" stroke="#b89020" stroke-width=".7"/><path d="M.800 14q0-6 5.200-6t5.200 6z" fill="#f3cf4a" stroke="#b89020" stroke-width=".7"/></svg>
<div class="a t" style="top:305.20px;height:15px;line-height:15px;color:#111;left:99.30px;"><span class="l" style="width:120.57px;font-size:10.71px;transform:scaleX(1.017)">12043029: Qing Yun Yao</span></div>
<svg class="a" style="left:28.30px;top:326.00px" width="8" height="8" viewBox="0 0 8 8"><rect x=".5" y=".5" width="7" height="7" fill="#fff" stroke="#9a9a9a" stroke-width=".8"/><path d="M2 4h4M4 2v4" stroke="#333" stroke-width=".9"/></svg>
<svg class="a" style="left:43.00px;top:323.00px" width="14" height="14" viewBox="0 0 14 14"><rect x="1" y="1" width="12" height="12" rx="1.500" fill="#f6d860" stroke="#c09a20" stroke-width=".9"/><text x="7" y="11" font-size="10" font-style="italic" font-weight="bold" font-family="Liberation Serif,serif" fill="#5a4200" text-anchor="middle">f</text></svg>
<div class="a t" style="top:322.50px;height:15px;line-height:15px;color:#111;left:62.70px;"><span style="font-size:10.4px">技术指标</span></div>
<svg class="a" style="left:28.30px;top:343.30px" width="8" height="8" viewBox="0 0 8 8"><rect x=".5" y=".5" width="7" height="7" fill="#fff" stroke="#9a9a9a" stroke-width=".8"/><path d="M2 4h4" stroke="#333" stroke-width=".9"/></svg>
<svg class="a" style="left:42.00px;top:339.80px" width="17" height="15" viewBox="0 0 17 15"><ellipse cx="8" cy="5" rx="7" ry="2.800" fill="#5a9ae0" stroke="#2a6ab8" stroke-width=".7"/><path d="M4.500 4.500a3.500 3 0 0 1 7 0z" fill="#8ac0f4" stroke="#2a6ab8" stroke-width=".6"/><path d="M3.500 7.500h9l-1 3.500h-7z" fill="#f2cf5a" stroke="#c09a20" stroke-width=".6"/><path d="M9 9l6 3.500-2.500.5 1.500 2-1.500.5-1-2.300-2 1z" fill="#f0c030" stroke="#a07a10" stroke-width=".5"/></svg>
<div class="a t" style="top:339.80px;height:15px;line-height:15px;color:#111;left:62.70px;"><span class="l" style="width:12.81px;font-size:10.71px;transform:scaleX(0.896)">EA</span><span style="font-size:10.4px">交易</span></div>
<div class="a" style="left:20.70px;top:354.00px;width:231.00px;height:1.00px;background:#222"></div>
<div class="a" style="left:22.50px;top:354.00px;width:38.40px;height:19.50px;background:#fff;border:1px solid #222;border-top:none;box-shadow:1px 1px 0 #888"></div>
<div class="a t" style="top:356.20px;height:15px;line-height:15px;color:#111;left:31.00px;"><span style="font-size:10.3px">常用</span></div>
<div class="a t" style="top:356.20px;height:15px;line-height:15px;color:#8a8a8a;left:69.00px;"><span style="font-size:10.3px">收藏夹</span></div>
<div class="a" style="left:110.00px;top:357.00px;width:1.00px;height:13.00px;background:#8a8a8a"></div>
<svg class="a" style="left:256.40px;top:98.60px" width="695.6" height="259.9" viewBox="0 0 695.6 259.9"><rect x="0" y="0" width="695.6" height="259.9" fill="#000"/><path d="M31.40 3.80V241.80M59.21 3.80V241.80M87.02 3.80V241.80M114.83 3.80V241.80M142.64 3.80V241.80M170.45 3.80V241.80M198.26 3.80V241.80M226.07 3.80V241.80M253.88 3.80V241.80M281.69 3.80V241.80M309.50 3.80V241.80M337.31 3.80V241.80M365.12 3.80V241.80M392.93 3.80V241.80M420.74 3.80V241.80M448.55 3.80V241.80M476.36 3.80V241.80M504.17 3.80V241.80M531.98 3.80V241.80M559.79 3.80V241.80M587.60 3.80V241.80M615.41 3.80V241.80M643.22 3.80V241.80M3.10 10.50H659.10M3.10 39.15H659.10M3.10 67.80H659.10M3.10 96.45H659.10M3.10 125.10H659.10M3.10 153.75H659.10M3.10 182.40H659.10M3.10 211.05H659.10M3.10 239.70H659.10" stroke="#858f99" stroke-width="0.800" stroke-dasharray="2.600 2.650" fill="none"/><path d="M2.1000000000000227 162.50H655.1" stroke="#6f7c89" stroke-width="0.850"/><path d="M2.35 63.39V80.81M5.10 65.23V83.56M7.85 56.06V63.39M9.68 54.23V59.73M12.06 49.65V56.98M13.90 51.48V59.73M15.73 61.56V68.89M17.38 64.31V89.97M19.21 79.89V91.80M21.04 85.39V94.55M22.88 92.72V100.05M25.26 93.64V101.88M27.09 92.72V103.72M28.93 88.14V100.05M30.76 86.30V114.71M32.59 103.72V119.30M34.42 100.05V114.71M36.26 96.39V110.13M38.09 93.64V105.55M39.92 85.39V118.38M41.76 103.72V120.21M43.22 104.63V136.71M45.42 129.38V145.87M46.89 116.55V145.87M48.72 116.55V131.21M50.55 120.21V127.54M52.39 118.38V125.71M53.67 103.72V120.21M55.50 113.80V120.21M57.33 114.71V121.13M59.17 112.88V123.88M61.00 117.46V123.88M62.83 118.38V129.38M64.67 120.21V129.38M66.50 121.13V128.46M68.88 120.21V131.21M71.08 119.30V127.54M72.91 106.47V125.71M74.75 92.72V116.55M76.58 91.80V105.55M78.41 92.72V106.47M80.25 94.55V107.38M82.08 96.39V110.13M84.83 93.64V104.63M86.66 101.88V123.88M88.49 100.05V113.80M90.33 91.80V109.22M92.16 88.14V98.22M93.99 94.55V112.88M95.82 105.55V113.80M97.66 106.47V111.96M99.49 107.38V112.88M101.32 106.47V114.71M103.71 105.55V118.38M105.90 109.22V118.38M107.74 110.13V124.79M109.57 104.63V114.71M111.40 100.05V109.22M113.24 92.72V108.30M115.07 96.39V111.05M116.54 103.72V123.88M118.37 109.22V129.38M120.20 107.38V118.38M121.48 105.55V114.71M123.32 111.96V123.88M125.15 116.55V131.21M126.62 116.55V137.62M127.90 81.72V120.21M129.73 87.22V100.05M131.93 82.64V98.22M133.76 89.05V103.72M135.60 96.39V107.38M137.43 101.88V111.96M139.81 104.63V111.96M141.65 104.63V111.05M144.39 102.80V110.13M146.23 101.88V109.22M148.43 97.30V105.55M150.81 95.47V102.80M153.19 93.64V101.88M155.39 92.72V98.22M156.86 85.39V96.39M158.32 78.97V94.55M159.60 87.96V98.04M161.43 87.96V98.04M163.27 87.05V97.13M165.10 85.21V96.21M166.93 63.22V90.71M168.40 45.81V66.88M170.23 54.05V77.88M172.06 55.89V69.63M173.90 58.64V71.47M175.73 59.55V70.55M177.38 47.64V61.39M179.21 47.64V53.14M181.59 47.64V52.22M183.79 47.64V52.22M185.81 48.56V56.80M187.46 54.97V65.05M189.29 55.89V61.39M191.12 54.05V59.55M192.96 55.89V61.39M194.79 56.80V62.30M196.62 54.97V63.22M198.46 48.56V59.55M199.92 43.06V57.72M201.76 50.39V61.39M203.59 49.47V60.47M205.42 46.72V55.89M206.89 46.72V54.97M208.35 15.56V54.97M210.00 32.98V63.22M212.20 54.97V81.55M214.04 57.72V75.13M215.87 67.80V79.71M217.70 68.72V78.80M219.17 72.38V82.46M221.00 66.88V74.22M222.83 62.30V72.38M224.67 65.97V73.30M226.50 64.13V71.47M228.33 66.88V73.30M230.16 69.63V76.96M232.00 71.47V83.38M233.83 83.38V90.71M235.66 84.30V91.63M237.50 80.63V88.88M239.33 65.05V85.21M241.16 61.39V72.38M242.99 57.72V65.05M244.83 49.47V64.13M246.66 50.39V63.22M248.49 61.39V71.47M250.33 54.97V71.47M252.16 49.47V61.39M253.44 43.97V60.47M255.27 43.06V61.39M257.11 57.72V65.05M258.94 63.22V69.63M260.77 65.97V75.13M262.61 72.38V79.71M264.44 73.30V76.96M266.27 71.47V76.96M268.10 71.47V76.05M269.94 73.30V79.71M271.77 68.72V80.63M273.60 69.63V77.88M275.44 68.72V74.22M277.27 67.80V73.30M279.10 64.13V68.72M280.57 63.22V72.38M282.03 68.72V79.71M283.50 75.13V87.05M285.33 85.21V98.04M287.17 87.05V96.21M289.00 88.88V97.13M290.83 89.79V99.88M292.66 90.71V103.54M294.50 94.38V101.71M296.33 105.37V116.37M298.16 101.71V111.79M300.00 94.38V109.04M301.83 92.54V97.13M303.66 91.63V98.04M305.49 93.46V98.04M307.33 93.46V97.13M309.16 91.63V96.21M310.99 90.71V95.29M312.83 89.79V93.46M314.66 85.21V92.54M316.49 87.05V94.38M318.32 93.46V99.88M319.60 94.47V99.97M321.43 93.56V99.05M322.90 94.47V125.63M324.73 105.47V123.80M326.56 107.30V115.55M328.40 113.72V125.63M330.23 110.97V121.05M332.06 101.80V115.55M333.53 86.22V114.63M335.36 92.64V120.13M337.01 106.39V130.21M338.84 106.39V126.55M340.68 107.30V127.46M342.51 115.55V128.38M344.34 119.22V129.30M346.18 118.30V123.80M348.01 117.38V122.88M349.84 113.72V120.13M351.67 110.05V118.30M353.51 109.13V113.72M355.34 110.05V114.63M357.17 109.13V114.63M359.01 108.22V113.72M360.84 108.22V112.80M362.67 105.47V112.80M364.87 90.81V110.05M366.70 99.05V111.88M368.54 102.72V112.80M370.37 104.55V117.38M372.20 110.05V120.13M374.04 112.80V125.63M375.50 115.55V139.38M376.97 99.97V132.05M378.80 99.05V143.04M380.63 102.72V124.71M382.47 102.72V120.13M384.30 113.72V128.38M386.13 127.46V136.63M387.97 135.71V143.96M389.80 136.63V143.96M391.63 133.88V143.04M393.46 131.13V143.96M395.30 130.21V139.38M397.13 137.54V143.04M398.96 141.21V146.71M400.80 142.13V147.62M402.63 141.21V148.54M404.46 141.21V149.46M406.29 141.21V151.29M408.13 136.63V150.37M409.96 120.13V142.13M411.79 119.22V128.38M413.62 118.30V126.55M415.46 100.89V124.71M417.29 96.30V124.71M419.12 107.30V123.80M420.41 110.05V130.21M422.24 110.97V124.71M424.07 111.88V122.88M425.90 115.55V123.80M427.74 113.72V122.88M429.57 114.63V121.05M431.40 112.80V120.13M432.87 113.72V127.46M434.70 107.30V115.55M436.54 100.89V108.22M438.37 99.05V106.39M440.20 98.14V107.30M442.03 102.72V108.22M443.87 103.64V107.30M445.33 99.05V105.47M447.17 99.05V111.88M449.00 97.22V115.55M450.83 97.22V111.88M452.66 104.55V114.63M453.95 110.05V123.80M455.41 120.13V129.30M457.06 115.55V124.71M458.90 109.13V120.13M460.73 110.05V135.71M462.56 105.47V123.80M464.39 104.55V120.13M466.23 99.05V111.88M468.06 98.14V110.05M469.53 97.22V107.30M471.36 104.55V111.88M473.19 103.64V110.97M475.03 103.64V110.05M476.49 99.05V109.13M478.32 88.97V104.55M479.60 92.64V99.97M481.43 94.47V101.80M483.27 99.97V106.39M485.10 105.47V110.05M486.93 107.30V113.72M488.76 109.13V116.47M490.23 108.22V121.05M492.06 116.47V126.55M493.90 123.80V130.21M495.36 124.71V131.13M497.01 121.05V128.38M498.84 114.63V125.63M500.68 110.97V121.05M502.51 107.30V119.22M504.34 106.39V117.38M506.18 110.97V120.13M507.64 102.72V120.13M509.48 112.80V123.80M511.31 119.22V125.63M513.14 121.96V126.55M514.97 121.05V125.63M516.81 119.22V123.80M518.64 117.38V121.96M520.47 113.72V120.13M522.31 113.72V118.30M524.14 112.80V118.30M525.97 112.80V117.38M527.80 110.97V116.47M530.00 107.30V114.63M531.84 105.47V123.80M533.67 115.55V123.80M535.50 116.47V124.71M537.33 114.63V122.88M539.17 112.80V121.05M540.68 116.40V127.23M542.83 117.38V128.38M544.12 112.80V126.55M545.58 115.55V132.05M547.18 128.31V140.22M549.35 129.40V138.06M550.86 121.81V135.89M553.03 125.06V211.70M554.76 207.37V235.52M556.49 211.70V234.44M558.23 214.95V233.36M559.96 213.87V231.19M561.69 208.45V216.03M563.42 208.45V214.95M565.16 199.79V212.78M566.89 205.20V211.70M568.62 204.12V211.70M570.36 203.04V210.62M572.09 200.87V209.53M573.82 185.71V203.04M575.55 185.71V199.79M577.07 174.88V187.87M578.80 180.29V191.12M580.54 181.38V195.46M582.27 184.63V197.62M584.00 182.46V203.04M585.73 185.71V197.62M587.47 201.95V211.70M589.20 209.53V226.86M590.93 211.70V227.94M592.66 210.62V226.86M594.40 209.53V223.61M596.13 216.03V223.61M597.86 217.11V222.53M599.60 218.20V223.61M601.33 217.11V222.53M603.06 217.11V222.53M604.79 216.03V223.61M606.53 217.11V223.61M608.26 218.20V224.70M609.99 219.28V225.78M611.72 216.03V225.78M613.46 209.53V236.61M615.19 205.20V216.03M616.92 194.37V209.53M618.66 197.62V211.70M620.39 197.62V208.45M622.12 196.54V206.29M623.85 193.29V203.04M625.59 178.13V203.04M627.32 185.71V203.04M629.05 185.71V199.79M630.78 166.22V192.21M632.52 157.55V173.80M634.25 157.55V175.96M635.98 161.88V170.55M637.72 156.47V169.46M639.45 164.05V177.05M641.18 158.64V171.63M642.91 158.64V170.55M644.65 162.97V169.46M646.38 164.05V172.71M648.11 159.72V165.13M649.84 160.80V162.97" stroke="#18cc18" stroke-width="1" fill="none"/><path d="M2.1000000000000227 241.79999999999998V2.8000000000000114H655.1V244.79999999999998M2.1000000000000227 241.79999999999998H655.1" stroke="#d8d8d8" stroke-width="1" fill="none"/><path d="M58.95 241.79999999999998v3M114.60 241.79999999999998v3M170.25 241.79999999999998v3M225.90 241.79999999999998v3M281.55 241.79999999999998v3M337.20 241.79999999999998v3M392.85 241.79999999999998v3M448.50 241.79999999999998v3M504.15 241.79999999999998v3M559.80 241.79999999999998v3M615.45 241.79999999999998v3M655.1 239.70h4" stroke="#d8d8d8" stroke-width="1" fill="none"/><text x="658.9" y="13.60" font-size="8.700" fill="#f0f0f0" font-family="Liberation Sans,sans-serif" textLength="28.800" lengthAdjust="spacingAndGlyphs">1.06360</text><text x="658.9" y="42.25" font-size="8.700" fill="#f0f0f0" font-family="Liberation Sans,sans-serif" textLength="28.800" lengthAdjust="spacingAndGlyphs">1.05990</text><text x="658.9" y="70.90" font-size="8.700" fill="#f0f0f0" font-family="Liberation Sans,sans-serif" textLength="28.800" lengthAdjust="spacingAndGlyphs">1.05620</text><text x="658.9" y="99.55" font-size="8.700" fill="#f0f0f0" font-family="Liberation Sans,sans-serif" textLength="28.800" lengthAdjust="spacingAndGlyphs">1.05250</text><text x="658.9" y="128.20" font-size="8.700" fill="#f0f0f0" font-family="Liberation Sans,sans-serif" textLength="28.800" lengthAdjust="spacingAndGlyphs">1.04880</text><text x="658.9" y="156.85" font-size="8.700" fill="#f0f0f0" font-family="Liberation Sans,sans-serif" textLength="28.800" lengthAdjust="spacingAndGlyphs">1.04500</text><text x="658.9" y="185.50" font-size="8.700" fill="#f0f0f0" font-family="Liberation Sans,sans-serif" textLength="28.800" lengthAdjust="spacingAndGlyphs">1.04130</text><text x="658.9" y="214.15" font-size="8.700" fill="#f0f0f0" font-family="Liberation Sans,sans-serif" textLength="28.800" lengthAdjust="spacingAndGlyphs">1.03760</text><text x="658.9" y="242.80" font-size="8.700" fill="#f0f0f0" font-family="Liberation Sans,sans-serif" textLength="28.800" lengthAdjust="spacingAndGlyphs">1.03390</text><rect x="655.8000000000001" y="157.70" width="34.800" height="9.800" fill="#e4e6e8"/><text x="658.9" y="165.60" font-size="8.700" fill="#000" font-family="Liberation Sans,sans-serif" textLength="28.800" lengthAdjust="spacingAndGlyphs">1.04389</text><text x="2.00" y="253.20" font-size="8.700" fill="#f0f0f0" font-family="Liberation Sans,sans-serif" textLength="46.7" lengthAdjust="spacingAndGlyphs">29 Nov 2024</text><text x="57.65" y="253.20" font-size="8.700" fill="#f0f0f0" font-family="Liberation Sans,sans-serif" textLength="42.8" lengthAdjust="spacingAndGlyphs">3 Dec 01:00</text><text x="113.30" y="253.20" font-size="8.700" fill="#f0f0f0" font-family="Liberation Sans,sans-serif" textLength="42.8" lengthAdjust="spacingAndGlyphs">4 Dec 09:00</text><text x="168.95" y="253.20" font-size="8.700" fill="#f0f0f0" font-family="Liberation Sans,sans-serif" textLength="42.8" lengthAdjust="spacingAndGlyphs">5 Dec 17:00</text><text x="224.60" y="253.20" font-size="8.700" fill="#f0f0f0" font-family="Liberation Sans,sans-serif" textLength="42.8" lengthAdjust="spacingAndGlyphs">9 Dec 01:00</text><text x="280.25" y="253.20" font-size="8.700" fill="#f0f0f0" font-family="Liberation Sans,sans-serif" textLength="47.6" lengthAdjust="spacingAndGlyphs">10 Dec 09:00</text><text x="335.90" y="253.20" font-size="8.700" fill="#f0f0f0" font-family="Liberation Sans,sans-serif" textLength="47.6" lengthAdjust="spacingAndGlyphs">11 Dec 17:00</text><text x="391.55" y="253.20" font-size="8.700" fill="#f0f0f0" font-family="Liberation Sans,sans-serif" textLength="47.6" lengthAdjust="spacingAndGlyphs">13 Dec 01:00</text><text x="447.20" y="253.20" font-size="8.700" fill="#f0f0f0" font-family="Liberation Sans,sans-serif" textLength="47.6" lengthAdjust="spacingAndGlyphs">16 Dec 09:00</text><text x="502.85" y="253.20" font-size="8.700" fill="#f0f0f0" font-family="Liberation Sans,sans-serif" textLength="47.6" lengthAdjust="spacingAndGlyphs">17 Dec 17:00</text><text x="558.50" y="253.20" font-size="8.700" fill="#f0f0f0" font-family="Liberation Sans,sans-serif" textLength="47.6" lengthAdjust="spacingAndGlyphs">19 Dec 01:00</text><text x="614.15" y="253.20" font-size="8.700" fill="#f0f0f0" font-family="Liberation Sans,sans-serif" textLength="47.6" lengthAdjust="spacingAndGlyphs">20 Dec 09:00</text><path d="M5.100000000000023 7.200000000000003h6l-3 3.800z" fill="#f0f0f0"/><text x="15.900000000000034" y="12.600000000000009" font-size="8.700" fill="#f0f0f0" font-family="Liberation Sans,sans-serif" textLength="175" lengthAdjust="spacingAndGlyphs" xml:space="preserve">EURUSD,H1  1.04406 1.04414 1.04387 1.04389</text></svg>
<div class="a" style="left:257.00px;top:358.50px;width:695.00px;height:21.00px;background:#f0f0f0"></div>
<div class="a" style="left:257.00px;top:361.10px;width:695.00px;height:1.00px;background:#222"></div>
<div class="a" style="left:340.40px;top:361.10px;width:79.60px;height:16.50px;background:#fff;border:1px solid #222;border-top:none;box-shadow:1px 1px 0 #888"></div>
<div class="a t" style="top:362.30px;height:15px;line-height:15px;color:#8a8a8a;left:270.50px;"><span class="l" style="width:58.11px;font-size:11.23px;transform:scaleX(0.896)">EURUSD,H4</span></div>
<div class="a t" style="top:362.30px;height:15px;line-height:15px;color:#111;left:351.20px;"><span class="l" style="width:58.11px;font-size:11.23px;transform:scaleX(0.896)">EURUSD,H1</span></div>
<div class="a t" style="top:362.30px;height:15px;line-height:15px;color:#8a8a8a;left:428.50px;"><span class="l" style="width:58.40px;font-size:11.23px;transform:scaleX(0.927)">USDCHF,H4</span></div>
<div class="a t" style="top:362.30px;height:15px;line-height:15px;color:#8a8a8a;left:507.30px;"><span class="l" style="width:58.43px;font-size:11.23px;transform:scaleX(0.900)">GBPUSD,H4</span></div>
<div class="a t" style="top:362.30px;height:15px;line-height:15px;color:#8a8a8a;left:586.60px;"><span class="l" style="width:62.67px;font-size:11.23px;transform:scaleX(0.924)">USDJPY,M15</span></div>
<div class="a t" style="top:362.30px;height:15px;line-height:15px;color:#8a8a8a;left:669.40px;"><span class="l" style="width:55.50px;font-size:11.23px;transform:scaleX(0.901)">GBPJPY,M1</span></div>
<div class="a t" style="top:362.30px;height:15px;line-height:15px;color:#8a8a8a;left:747.50px;"><span class="l" style="width:58.11px;font-size:11.23px;transform:scaleX(0.896)">EURUSD,H1</span></div>
<div class="a t" style="top:362.30px;height:15px;line-height:15px;color:#8a8a8a;left:825.60px;"><span class="l" style="width:56.99px;font-size:11.23px;transform:scaleX(0.898)">EURGBP,H1</span></div>
<div class="a" style="left:902.90px;top:362.30px;width:17.00px;height:15.00px;overflow:hidden"><div class="t" style="position:absolute;left:0;top:0;line-height:15px;color:#8a8a8a"><span class="l" style="width:41.87px;font-size:11.23px;transform:scaleX(0.895)">XAUUSD</span></div></div>
<div class="a" style="left:496.60px;top:364.30px;width:1.00px;height:12.00px;background:#8a8a8a"></div>
<div class="a" style="left:577.30px;top:364.30px;width:1.00px;height:12.00px;background:#8a8a8a"></div>
<div class="a" style="left:660.00px;top:364.30px;width:1.00px;height:12.00px;background:#8a8a8a"></div>
<div class="a" style="left:738.20px;top:364.30px;width:1.00px;height:12.00px;background:#8a8a8a"></div>
<div class="a" style="left:817.00px;top:364.30px;width:1.00px;height:12.00px;background:#8a8a8a"></div>
<div class="a" style="left:893.60px;top:364.30px;width:1.00px;height:12.00px;background:#8a8a8a"></div>
<svg class="a" style="left:921.00px;top:364.00px" width="28" height="12" viewBox="0 0 28 12"><path d="M6.500 3v6l-3-3z" fill="#9a9a9a"/><path d="M19.500 3v6l3-3z" fill="#111"/></svg>
<div class="a" style="left:17.50px;top:379.00px;width:934.50px;height:1.00px;background:#fdfdfd"></div>
<div class="a" style="left:17.00px;top:380.00px;width:12.80px;height:182.00px;background:linear-gradient(180deg,#f2f5f9 0%,#dde6f1 25%,#c6d5e8 60%,#b6cae2 100%)"></div>
<svg class="a" style="left:18.40px;top:381.80px" width="10" height="10" viewBox="0 0 10 10"><path d="M2.7 2.7L7.3 7.3M7.3 2.7L2.7 7.3" stroke="#111" stroke-width="1.5"/></svg>
<div class="a" style="left:19.00px;top:541.00px;width:11.00px;height:20.00px;"><div class="t" style="position:absolute;left:0;top:0;width:20px;height:11px;line-height:11px;font-size:9.800px;color:#111;transform-origin:0 0;transform:rotate(-90deg) translate(-20px,0)">终端</div></div>
<div class="a" style="left:29.90px;top:382.30px;width:918.80px;height:160.00px;background:#fff;border-left:1px solid #8a8a8a;border-top:1px solid #8a8a8a"></div>
<div class="a" style="left:30.90px;top:421.70px;width:902.80px;height:18.20px;background:#ececec"></div>
<div class="a" style="left:30.90px;top:458.10px;width:902.80px;height:18.30px;background:#0a74d8"></div>
<div class="a" style="left:30.90px;top:494.60px;width:902.80px;height:18.20px;background:#ececec"></div>
<div class="a" style="left:30.90px;top:512.80px;width:902.80px;height:18.30px;background:#c8c8c8"></div>
<div class="a" style="left:30.90px;top:403.40px;width:902.80px;height:1.00px;background:#e2e2e2"></div>
<div class="a" style="left:30.90px;top:421.70px;width:902.80px;height:1.00px;background:#e2e2e2"></div>
<div class="a" style="left:30.90px;top:439.90px;width:902.80px;height:1.00px;background:#e2e2e2"></div>
<div class="a" style="left:30.90px;top:458.10px;width:902.80px;height:1.00px;background:#e2e2e2"></div>
<div class="a" style="left:30.90px;top:476.40px;width:902.80px;height:1.00px;background:#e2e2e2"></div>
<div class="a" style="left:30.90px;top:494.60px;width:902.80px;height:1.00px;background:#e2e2e2"></div>
<div class="a" style="left:30.90px;top:458.10px;width:902.80px;height:1.00px;background:#0a74d8"></div>
<div class="a" style="left:30.90px;top:476.40px;width:902.80px;height:1.00px;background:#0a74d8"></div>
<div class="a" style="left:110.00px;top:383.30px;width:1.00px;height:129.50px;background:#e2e2e2"></div>
<div class="a" style="left:245.30px;top:383.30px;width:1.00px;height:129.50px;background:#e2e2e2"></div>
<div class="a" style="left:308.20px;top:383.30px;width:1.00px;height:129.50px;background:#e2e2e2"></div>
<div class="a" style="left:356.60px;top:383.30px;width:1.00px;height:74.80px;background:#e2e2e2"></div>
<div class="a" style="left:418.40px;top:383.30px;width:1.00px;height:74.80px;background:#e2e2e2"></div>
<div class="a" style="left:479.90px;top:383.30px;width:1.00px;height:74.80px;background:#e2e2e2"></div>
<div class="a" style="left:542.00px;top:383.30px;width:1.00px;height:74.80px;background:#e2e2e2"></div>
<div class="a" style="left:603.60px;top:383.30px;width:1.00px;height:74.80px;background:#e2e2e2"></div>
<div class="a" style="left:738.80px;top:383.30px;width:1.00px;height:74.80px;background:#e2e2e2"></div>
<div class="a" style="left:801.00px;top:383.30px;width:1.00px;height:74.80px;background:#e2e2e2"></div>
<div class="a" style="left:862.50px;top:383.30px;width:1.00px;height:129.50px;background:#e2e2e2"></div>
<div class="a" style="left:933.50px;top:383.30px;width:1.00px;height:147.80px;background:#e2e2e2"></div>
<div class="a t" style="top:385.50px;height:15px;line-height:15px;color:#111;left:36.60px;"><span style="font-size:10.3px">订单</span></div>
<svg class="a" style="left:66.00px;top:388.00px" width="8" height="8" viewBox="0 0 8 8"><path d="M2 6.500l3.500-5" stroke="#888" stroke-width=".9"/></svg>
<div class="a t" style="top:385.50px;height:15px;line-height:15px;color:#111;right:726.10px;"><span style="font-size:10.3px">时间</span></div>
<div class="a t" style="top:385.50px;height:15px;line-height:15px;color:#111;right:664.00px;"><span style="font-size:10.3px">类型</span></div>
<div class="a t" style="top:385.50px;height:15px;line-height:15px;color:#111;right:615.50px;"><span style="font-size:10.3px">手数</span></div>
<div class="a t" style="top:385.50px;height:15px;line-height:15px;color:#111;right:492.60px;"><span style="font-size:10.3px">价格</span></div>
<div class="a t" style="top:385.50px;height:15px;line-height:15px;color:#111;right:431.00px;"><span style="font-size:10.3px">止损</span></div>
<div class="a t" style="top:385.50px;height:15px;line-height:15px;color:#111;right:368.50px;"><span style="font-size:10.3px">止盈</span></div>
<div class="a t" style="top:385.50px;height:15px;line-height:15px;color:#111;right:233.30px;"><span style="font-size:10.3px">时间</span></div>
<div class="a t" style="top:385.50px;height:15px;line-height:15px;color:#111;right:171.10px;"><span style="font-size:10.3px">价格</span></div>
<div class="a t" style="top:385.50px;height:15px;line-height:15px;color:#111;right:109.60px;"><span style="font-size:10.3px">库存费</span></div>
<div class="a t" style="top:385.50px;height:15px;line-height:15px;color:#111;right:39.60px;"><span style="font-size:10.3px">获利</span></div>
<div class="a t" style="top:385.50px;height:15px;line-height:15px;color:#111;left:372.30px;"><span style="font-size:10.3px">交易品种</span></div>
<div class="a" style="left:516.50px;top:398.60px;width:20.50px;height:1.00px;background:#666"></div>
<div class="a" style="left:579.00px;top:398.60px;width:20.50px;height:1.00px;background:#666"></div>
<svg class="a" style="left:33.50px;top:405.40px" width="14" height="15" viewBox="0 0 14 15"><path d="M1.500 1h6l3 3v9.500h-9z" fill="#fff" stroke="#777" stroke-width=".9"/><path d="M7.500 1v3h3" fill="none" stroke="#777" stroke-width=".8"/><circle cx="9.500" cy="11" r="2.900" fill="#f0623a" stroke="#b8320c" stroke-width=".7"/></svg>
<div class="a t" style="top:405.40px;height:15px;line-height:15px;color:#111;left:51.20px;"><span class="l" style="width:53.98px;font-size:10.71px;transform:scaleX(1.007)">142148459</span></div>
<div class="a t" style="top:405.40px;height:15px;line-height:15px;color:#111;right:724.70px;"><span class="l" style="width:96.68px;font-size:10.71px;transform:scaleX(0.984)">2024.12.05 08:45:39</span></div>
<div class="a t" style="top:405.40px;height:15px;line-height:15px;color:#111;right:662.90px;"><span class="l" style="width:15.92px;font-size:10.71px;transform:scaleX(0.991)">sell</span></div>
<div class="a t" style="top:405.40px;height:15px;line-height:15px;color:#111;right:615.50px;"><span class="l" style="width:20.41px;font-size:10.71px;transform:scaleX(0.979)">0.01</span></div>
<div class="a t" style="top:405.40px;height:15px;line-height:15px;color:#111;right:553.00px;"><span class="l" style="width:37.21px;font-size:10.71px;transform:scaleX(1.059)">gbpusd</span></div>
<div class="a t" style="top:405.40px;height:15px;line-height:15px;color:#111;right:490.20px;"><span class="l" style="width:38.40px;font-size:10.71px;transform:scaleX(0.992)">1.27176</span></div>
<div class="a t" style="top:405.40px;height:15px;line-height:15px;color:#111;right:429.30px;"><span class="l" style="width:38.40px;font-size:10.71px;transform:scaleX(0.992)">0.00000</span></div>
<div class="a t" style="top:405.40px;height:15px;line-height:15px;color:#111;right:367.20px;"><span class="l" style="width:38.40px;font-size:10.71px;transform:scaleX(0.992)">0.00000</span></div>
<div class="a t" style="top:405.40px;height:15px;line-height:15px;color:#111;right:231.60px;"><span class="l" style="width:96.68px;font-size:10.71px;transform:scaleX(0.984)">2024.12.05 10:21:18</span></div>
<div class="a t" style="top:405.40px;height:15px;line-height:15px;color:#111;right:170.10px;"><span class="l" style="width:38.40px;font-size:10.71px;transform:scaleX(0.992)">1.27375</span></div>
<div class="a t" style="top:405.40px;height:15px;line-height:15px;color:#111;right:107.90px;"><span class="l" style="width:20.41px;font-size:10.71px;transform:scaleX(0.979)">0.00</span></div>
<div class="a t" style="top:405.40px;height:15px;line-height:15px;color:#111;right:37.20px;"><span class="l" style="width:24.86px;font-size:10.71px;transform:scaleX(1.018)">-1.99</span></div>
<svg class="a" style="left:33.50px;top:423.70px" width="14" height="15" viewBox="0 0 14 15"><path d="M1.500 1h6l3 3v9.500h-9z" fill="#fff" stroke="#777" stroke-width=".9"/><path d="M7.500 1v3h3" fill="none" stroke="#777" stroke-width=".8"/><circle cx="9.500" cy="11" r="2.900" fill="#f0623a" stroke="#b8320c" stroke-width=".7"/></svg>
<div class="a t" style="top:423.70px;height:15px;line-height:15px;color:#111;left:51.20px;"><span class="l" style="width:53.98px;font-size:10.71px;transform:scaleX(1.007)">142148460</span></div>
<div class="a t" style="top:423.70px;height:15px;line-height:15px;color:#111;right:724.70px;"><span class="l" style="width:96.68px;font-size:10.71px;transform:scaleX(0.984)">2024.12.05 08:45:41</span></div>
<div class="a t" style="top:423.70px;height:15px;line-height:15px;color:#111;right:662.90px;"><span class="l" style="width:15.92px;font-size:10.71px;transform:scaleX(0.991)">sell</span></div>
<div class="a t" style="top:423.70px;height:15px;line-height:15px;color:#111;right:615.50px;"><span class="l" style="width:20.41px;font-size:10.71px;transform:scaleX(0.979)">0.01</span></div>
<div class="a t" style="top:423.70px;height:15px;line-height:15px;color:#111;right:553.00px;"><span class="l" style="width:36.09px;font-size:10.71px;transform:scaleX(1.027)">audusd</span></div>
<div class="a t" style="top:423.70px;height:15px;line-height:15px;color:#111;right:490.20px;"><span class="l" style="width:38.40px;font-size:10.71px;transform:scaleX(0.992)">0.64369</span></div>
<div class="a t" style="top:423.70px;height:15px;line-height:15px;color:#111;right:429.30px;"><span class="l" style="width:38.40px;font-size:10.71px;transform:scaleX(0.992)">0.00000</span></div>
<div class="a t" style="top:423.70px;height:15px;line-height:15px;color:#111;right:367.20px;"><span class="l" style="width:38.40px;font-size:10.71px;transform:scaleX(0.992)">0.00000</span></div>
<div class="a t" style="top:423.70px;height:15px;line-height:15px;color:#111;right:231.60px;"><span class="l" style="width:96.68px;font-size:10.71px;transform:scaleX(0.984)">2024.12.05 10:21:18</span></div>
<div class="a t" style="top:423.70px;height:15px;line-height:15px;color:#111;right:170.10px;"><span class="l" style="width:38.40px;font-size:10.71px;transform:scaleX(0.992)">0.64456</span></div>
<div class="a t" style="top:423.70px;height:15px;line-height:15px;color:#111;right:107.90px;"><span class="l" style="width:20.41px;font-size:10.71px;transform:scaleX(0.979)">0.00</span></div>
<div class="a t" style="top:423.70px;height:15px;line-height:15px;color:#111;right:37.20px;"><span class="l" style="width:24.86px;font-size:10.71px;transform:scaleX(1.018)">-0.87</span></div>
<svg class="a" style="left:33.50px;top:441.90px" width="14" height="15" viewBox="0 0 14 15"><path d="M1.500 1h6l3 3v9.500h-9z" fill="#fff" stroke="#777" stroke-width=".9"/><path d="M7.500 1v3h3" fill="none" stroke="#777" stroke-width=".8"/><circle cx="9.500" cy="11" r="2.900" fill="#4aa0f0" stroke="#1a5ab8" stroke-width=".7"/></svg>
<div class="a t" style="top:441.90px;height:15px;line-height:15px;color:#111;left:51.20px;"><span class="l" style="width:53.98px;font-size:10.71px;transform:scaleX(1.007)">142148461</span></div>
<div class="a t" style="top:441.90px;height:15px;line-height:15px;color:#111;right:724.70px;"><span class="l" style="width:96.68px;font-size:10.71px;transform:scaleX(0.984)">2024.12.05 08:45:41</span></div>
<div class="a t" style="top:441.90px;height:15px;line-height:15px;color:#111;right:662.90px;"><span class="l" style="width:18.23px;font-size:10.71px;transform:scaleX(1.055)">buy</span></div>
<div class="a t" style="top:441.90px;height:15px;line-height:15px;color:#111;right:615.50px;"><span class="l" style="width:20.41px;font-size:10.71px;transform:scaleX(0.979)">0.01</span></div>
<div class="a t" style="top:441.90px;height:15px;line-height:15px;color:#111;right:553.00px;"><span class="l" style="width:32.49px;font-size:10.71px;transform:scaleX(1.030)">usdchf</span></div>
<div class="a t" style="top:441.90px;height:15px;line-height:15px;color:#111;right:490.20px;"><span class="l" style="width:38.40px;font-size:10.71px;transform:scaleX(0.992)">0.88345</span></div>
<div class="a t" style="top:441.90px;height:15px;line-height:15px;color:#111;right:429.30px;"><span class="l" style="width:38.40px;font-size:10.71px;transform:scaleX(0.992)">0.00000</span></div>
<div class="a t" style="top:441.90px;height:15px;line-height:15px;color:#111;right:367.20px;"><span class="l" style="width:38.40px;font-size:10.71px;transform:scaleX(0.992)">0.00000</span></div>
<div class="a t" style="top:441.90px;height:15px;line-height:15px;color:#111;right:231.60px;"><span class="l" style="width:96.68px;font-size:10.71px;transform:scaleX(0.984)">2024.12.05 10:21:19</span></div>
<div class="a t" style="top:441.90px;height:15px;line-height:15px;color:#111;right:170.10px;"><span class="l" style="width:38.40px;font-size:10.71px;transform:scaleX(0.992)">0.88436</span></div>
<div class="a t" style="top:441.90px;height:15px;line-height:15px;color:#111;right:107.90px;"><span class="l" style="width:20.41px;font-size:10.71px;transform:scaleX(0.979)">0.00</span></div>
<div class="a t" style="top:441.90px;height:15px;line-height:15px;color:#111;right:37.20px;"><span class="l" style="width:20.41px;font-size:10.71px;transform:scaleX(0.979)">1.03</span></div>
<svg class="a" style="left:33.50px;top:460.60px" width="13" height="14" viewBox="0 0 13 14"><rect x="1" y="1" width="10" height="12" rx=".8" fill="#fff" stroke="#888" stroke-width=".9"/><path d="M6 11l-3-3.200h1.700v-3.300h2.600v3.300h1.700z" fill="#e8491f" stroke="#a8300c" stroke-width=".5"/></svg>
<div class="a t" style="top:460.10px;height:15px;line-height:15px;color:#fff;left:51.20px;"><span class="l" style="width:53.98px;font-size:10.71px;transform:scaleX(1.007)">142148682</span></div>
<div class="a t" style="top:460.10px;height:15px;line-height:15px;color:#fff;right:724.70px;"><span class="l" style="width:96.68px;font-size:10.71px;transform:scaleX(0.992)">2024.12.05 10:11:18</span></div>
<div class="a t" style="top:460.10px;height:15px;line-height:15px;color:#fff;right:662.90px;"><span class="l" style="width:37.82px;font-size:10.71px;transform:scaleX(1.008)">balance</span></div>
<div class="a t" style="top:460.10px;height:15px;line-height:15px;color:#fff;right:107.90px;"><span class="l" style="width:69.26px;font-size:10.71px;transform:scaleX(1.030)">Manifest Error</span></div>
<div class="a t" style="top:460.10px;height:15px;line-height:15px;color:#fff;right:37.20px;"><span class="l" style="width:45.90px;font-size:10.71px;transform:scaleX(1.014)">-2 681.75</span></div>
<svg class="a" style="left:33.50px;top:478.90px" width="13" height="14" viewBox="0 0 13 14"><rect x="1" y="1" width="10" height="12" rx=".8" fill="#fff" stroke="#888" stroke-width=".9"/><path d="M6 11l-3-3.200h1.700v-3.300h2.600v3.300h1.700z" fill="#e8491f" stroke="#a8300c" stroke-width=".5"/></svg>
<div class="a t" style="top:478.40px;height:15px;line-height:15px;color:#111;left:51.20px;"><span class="l" style="width:53.98px;font-size:10.71px;transform:scaleX(1.007)">142151415</span></div>
<div class="a t" style="top:478.40px;height:15px;line-height:15px;color:#111;right:724.70px;"><span class="l" style="width:96.68px;font-size:10.71px;transform:scaleX(0.984)">2024.12.06 08:48:38</span></div>
<div class="a t" style="top:478.40px;height:15px;line-height:15px;color:#111;right:662.90px;"><span class="l" style="width:37.82px;font-size:10.71px;transform:scaleX(1.008)">balance</span></div>
<div class="a t" style="top:478.40px;height:15px;line-height:15px;color:#111;right:107.90px;"><span class="l" style="width:83.47px;font-size:10.71px;transform:scaleX(1.047)">Withdrawal-ODA</span></div>
<div class="a t" style="top:478.40px;height:15px;line-height:15px;color:#111;right:37.20px;"><span class="l" style="width:51.90px;font-size:10.71px;transform:scaleX(1.013)">-10 000.00</span></div>
<svg class="a" style="left:33.50px;top:497.10px" width="13" height="14" viewBox="0 0 13 14"><rect x="1" y="1" width="10" height="12" rx=".8" fill="#fff" stroke="#888" stroke-width=".9"/><path d="M6 11l-3-3.200h1.700v-3.300h2.600v3.300h1.700z" fill="#e8491f" stroke="#a8300c" stroke-width=".5"/></svg>
<div class="a t" style="top:496.60px;height:15px;line-height:15px;color:#111;left:51.20px;"><span class="l" style="width:53.98px;font-size:10.71px;transform:scaleX(1.007)">142240105</span></div>
<div class="a t" style="top:496.60px;height:15px;line-height:15px;color:#111;right:724.70px;"><span class="l" style="width:96.68px;font-size:10.71px;transform:scaleX(0.992)">2024.12.17 10:11:41</span></div>
<div class="a t" style="top:496.60px;height:15px;line-height:15px;color:#111;right:662.90px;"><span class="l" style="width:37.82px;font-size:10.71px;transform:scaleX(1.008)">balance</span></div>
<div class="a t" style="top:496.60px;height:15px;line-height:15px;color:#111;right:107.90px;"><span class="l" style="width:83.47px;font-size:10.71px;transform:scaleX(1.047)">Withdrawal-ODA</span></div>
<div class="a t" style="top:496.60px;height:15px;line-height:15px;color:#111;right:37.20px;"><span class="l" style="width:51.90px;font-size:10.71px;transform:scaleX(1.013)">-33 202.00</span></div>
<svg class="a" style="left:36.00px;top:517.80px" width="9" height="9" viewBox="0 0 9 9"><circle cx="4.500" cy="4.500" r="3" fill="#d8d8d8" stroke="#8a8a8a" stroke-width=".9"/></svg>
<div class="a t" style="top:514.80px;height:15px;line-height:15px;color:#111;font-weight:bold;left:49.80px;"><span style="font-size:10.4px">盈</span><span class="l" style="width:4.60px;font-size:10.71px;transform:scaleX(1.546)">/</span><span style="font-size:10.4px">亏</span><span class="l" style="width:62.55px;font-size:10.71px;transform:scaleX(1.040)">: 26 620.49  </span><span style="font-size:10.4px">信用额</span><span class="l" style="width:33.89px;font-size:10.71px;transform:scaleX(1.016)">: 0.00  </span><span style="font-size:10.4px">存款</span><span class="l" style="width:33.89px;font-size:10.71px;transform:scaleX(1.016)">: 0.00  </span><span style="font-size:10.4px">取款</span><span class="l" style="width:60.81px;font-size:10.71px;transform:scaleX(1.053)">: -45 883.75</span></div>
<div class="a t" style="top:514.80px;height:15px;line-height:15px;color:#111;font-weight:bold;right:37.20px;"><span class="l" style="width:55.02px;font-size:10.71px;transform:scaleX(1.074)">-19 263.26</span></div>
<div class="a" style="left:934.60px;top:383.30px;width:13.60px;height:158.50px;background:#f0f0f0"></div>
<div class="a" style="left:935.60px;top:512.80px;width:11.60px;height:14.50px;background:#cdcdcd"></div>
<svg class="a" style="left:934.60px;top:386.30px" width="13.6" height="8" viewBox="0 0 13.6 8"><path d="M3.5999999999999996 6L6.8 2.500L10.0 6" stroke="#505050" stroke-width="1.500" fill="none"/></svg>
<svg class="a" style="left:934.60px;top:530.80px" width="13.6" height="8" viewBox="0 0 13.6 8"><path d="M3.5999999999999996 2L6.8 5.500L10.0 2" stroke="#505050" stroke-width="1.500" fill="none"/></svg>
<div class="a" style="left:30.70px;top:541.80px;width:918.00px;height:20.50px;background:#f0f0f0"></div>
<div class="a" style="left:30.70px;top:541.80px;width:917.50px;height:1.20px;background:#222"></div>
<div class="a" style="left:111.00px;top:541.80px;width:56.70px;height:19.30px;background:#fff;border:1px solid #222;border-top:none;box-shadow:1px 1px 0 #888"></div>
<div class="a t" style="top:543.50px;height:15px;line-height:15px;color:#8a8a8a;left:42.50px;"><span style="font-size:10.3px">交易</span></div>
<div class="a t" style="top:543.50px;height:15px;line-height:15px;color:#8a8a8a;left:80.00px;"><span style="font-size:10.3px">展示</span></div>
<div class="a t" style="top:543.50px;height:15px;line-height:15px;color:#111;left:118.50px;"><span style="font-size:10.3px">账户历史</span></div>
<div class="a t" style="top:543.50px;height:15px;line-height:15px;color:#8a8a8a;left:177.50px;"><span style="font-size:10.3px">新闻</span></div>
<div class="a t" style="top:543.50px;height:15px;line-height:15px;color:#8a8a8a;left:216.00px;"><span style="font-size:10.3px">警报</span></div>
<div class="a t" style="top:543.50px;height:15px;line-height:15px;color:#8a8a8a;left:254.00px;"><span style="font-size:10.3px">邮箱</span></div>
<div class="a t" style="top:543.50px;height:15px;line-height:15px;color:#8a8a8a;left:299.00px;"><span style="font-size:10.3px">市场</span></div>
<div class="a t" style="top:543.50px;height:15px;line-height:15px;color:#8a8a8a;left:337.50px;"><span style="font-size:10.3px">信号</span></div>
<div class="a t" style="top:543.50px;height:15px;line-height:15px;color:#8a8a8a;left:376.00px;"><span style="font-size:10.3px">文章</span></div>
<div class="a t" style="top:543.50px;height:15px;line-height:15px;color:#8a8a8a;left:421.00px;"><span style="font-size:10.3px">代码库</span></div>
<div class="a t" style="top:543.50px;height:15px;line-height:15px;color:#8a8a8a;left:469.30px;"><span class="l" style="width:12.69px;font-size:10.61px;transform:scaleX(0.896)">EA</span></div>
<div class="a t" style="top:543.50px;height:15px;line-height:15px;color:#8a8a8a;left:500.00px;"><span style="font-size:10.3px">日志</span></div>
<div class="a t" style="top:549.80px;height:10px;line-height:10px;color:#e63a24;font-weight:bold;left:276.50px;"><span class="l" style="width:4.73px;font-size:8.45px;transform:scaleX(1.007)">6</span></div>
<div class="a t" style="top:549.80px;height:10px;line-height:10px;color:#e63a24;font-weight:bold;left:398.00px;"><span class="l" style="width:4.73px;font-size:8.45px;transform:scaleX(1.007)">8</span></div>
<div class="a" style="left:71.50px;top:545.00px;width:1.00px;height:12.50px;background:#8a8a8a"></div>
<div class="a" style="left:206.50px;top:545.00px;width:1.00px;height:12.50px;background:#8a8a8a"></div>
<div class="a" style="left:245.00px;top:545.00px;width:1.00px;height:12.50px;background:#8a8a8a"></div>
<div class="a" style="left:291.00px;top:545.00px;width:1.00px;height:12.50px;background:#8a8a8a"></div>
<div class="a" style="left:328.50px;top:545.00px;width:1.00px;height:12.50px;background:#8a8a8a"></div>
<div class="a" style="left:366.50px;top:545.00px;width:1.00px;height:12.50px;background:#8a8a8a"></div>
<div class="a" style="left:411.50px;top:545.00px;width:1.00px;height:12.50px;background:#8a8a8a"></div>
<div class="a" style="left:460.00px;top:545.00px;width:1.00px;height:12.50px;background:#8a8a8a"></div>
<div class="a" style="left:491.50px;top:545.00px;width:1.00px;height:12.50px;background:#8a8a8a"></div>
<div class="a" style="left:529.40px;top:545.00px;width:1.00px;height:12.50px;background:#8a8a8a"></div>
<div class="a" style="left:17.50px;top:564.50px;width:934.50px;height:1.00px;background:#d6d6d6"></div>
<div class="a" style="left:17.50px;top:565.40px;width:934.50px;height:1.00px;background:#fff"></div>
<div class="a t" style="top:570.00px;height:15px;line-height:15px;color:#111;left:19.00px;"><span style="font-size:10.5px">寻求帮助</span><span class="l" style="width:2.44px;font-size:10.81px;transform:scaleX(0.811)">,</span><span style="font-size:10.5px">请按</span><span class="l" style="width:11.54px;font-size:10.81px;transform:scaleX(0.914)">F1</span><span style="font-size:10.5px">键</span></div>
<div class="a" style="left:243.50px;top:568.00px;width:1.00px;height:15.00px;background:#d0d0d0"></div>
<div class="a" style="left:361.00px;top:568.00px;width:1.00px;height:15.00px;background:#d0d0d0"></div>
<div class="a" style="left:462.50px;top:568.00px;width:1.00px;height:15.00px;background:#d0d0d0"></div>
<div class="a" style="left:534.00px;top:568.00px;width:1.00px;height:15.00px;background:#d0d0d0"></div>
<div class="a" style="left:604.00px;top:568.00px;width:1.00px;height:15.00px;background:#d0d0d0"></div>
<div class="a" style="left:671.50px;top:568.00px;width:1.00px;height:15.00px;background:#d0d0d0"></div>
<div class="a" style="left:741.50px;top:568.00px;width:1.00px;height:15.00px;background:#d0d0d0"></div>
<div class="a" style="left:808.00px;top:568.00px;width:1.00px;height:15.00px;background:#d0d0d0"></div>
<div class="a t" style="top:570.00px;height:15px;line-height:15px;color:#111;left:249.00px;"><span class="l" style="width:35.53px;font-size:10.71px;transform:scaleX(1.047)">Default</span></div>
<div class="a t" style="top:570.00px;height:15px;line-height:15px;color:#111;left:366.50px;"><span class="l" style="width:82.27px;font-size:10.71px;transform:scaleX(0.987)">2024.12.05 09:00</span></div>
<div class="a t" style="top:570.00px;height:15px;line-height:15px;color:#111;left:468.50px;"><span class="l" style="width:52.26px;font-size:10.71px;transform:scaleX(0.986)">O: 1.05255</span></div>
<div class="a t" style="top:570.00px;height:15px;line-height:15px;color:#111;left:539.00px;"><span class="l" style="width:51.77px;font-size:10.71px;transform:scaleX(0.988)">H: 1.05386</span></div>
<div class="a t" style="top:570.00px;height:15px;line-height:15px;color:#111;left:609.00px;"><span class="l" style="width:49.11px;font-size:10.71px;transform:scaleX(0.970)">L: 1.05248</span></div>
<div class="a t" style="top:570.00px;height:15px;line-height:15px;color:#111;left:678.00px;"><span class="l" style="width:50.75px;font-size:10.71px;transform:scaleX(0.968)">C: 1.05352</span></div>
<div class="a t" style="top:570.00px;height:15px;line-height:15px;color:#111;left:747.50px;"><span class="l" style="width:36.37px;font-size:10.71px;transform:scaleX(0.996)">V: 3581</span></div>
<div class="a t" style="top:570.00px;height:15px;line-height:15px;color:#111;left:839.00px;"><span class="l" style="width:43.45px;font-size:10.71px;transform:scaleX(1.057)">477/1 kb</span></div>
<svg class="a" style="left:815.00px;top:572.00px" width="21" height="10" viewBox="0 0 21 10"><rect x="0.0" y="1.5" width="1.500" height="8.5" fill="#3a8a2a"/><rect x="2.1" y="1.3" width="1.500" height="8.7" fill="#5a7ab0"/><rect x="4.2" y="1.1" width="1.500" height="8.9" fill="#3a8a2a"/><rect x="6.3" y="0.9" width="1.500" height="9.1" fill="#5a7ab0"/><rect x="8.4" y="0.7" width="1.500" height="9.3" fill="#3a8a2a"/><rect x="10.5" y="0.5" width="1.500" height="9.5" fill="#5a7ab0"/><rect x="12.6" y="0.3" width="1.500" height="9.7" fill="#3a8a2a"/><rect x="14.7" y="0.1" width="1.500" height="9.9" fill="#5a7ab0"/><rect x="16.8" y="0.0" width="1.500" height="10.0" fill="#3a8a2a"/><rect x="18.9" y="0.0" width="1.500" height="10.0" fill="#5a7ab0"/></svg>
<svg class="a" style="left:938.00px;top:573.00px" width="13" height="13" viewBox="0 0 13 13"><path d="M12.500 1l-11.500 11.500M12.500 5l-7.500 7.500M12.500 9l-3.500 3.500" stroke="#b0b0b0" stroke-width="1"/></svg>
</body></html>
